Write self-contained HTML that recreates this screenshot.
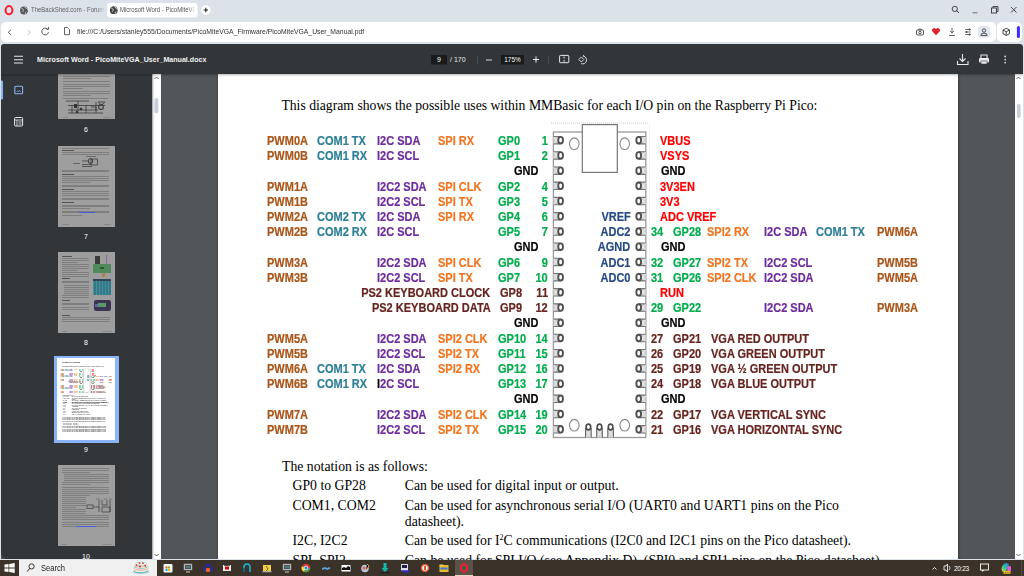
<!DOCTYPE html>
<html><head><meta charset="utf-8">
<style>
*{margin:0;padding:0;box-sizing:border-box}
html,body{width:1024px;height:576px;overflow:hidden;background:#dbe2ea;font-family:"Liberation Sans",sans-serif;position:relative}
.abs{position:absolute}
#addr{position:absolute;left:1px;top:21.9px;width:995px;height:20.4px;background:#fff;border-radius:5px}
#ext{position:absolute;left:997px;top:21.9px;width:25px;height:20.4px;background:#fff;border-radius:5px}
#viewer{position:absolute;left:1px;top:44px;width:1022px;height:515px;background:#525659;border-radius:4px 4px 0 0;overflow:hidden}
#tb{position:absolute;left:0;top:0;width:1022px;height:30px;background:#323639;box-shadow:0 1px 2px rgba(0,0,0,.3);z-index:2}
#side{position:absolute;left:0;top:0;width:151px;height:515px;background:#323639;border-radius:0 0 0 6px;overflow:hidden;box-shadow:1px 0 2px rgba(0,0,0,.4);z-index:1}
#sbar{position:absolute;left:151px;top:30px;width:9px;height:485px;background:#fff}
#rbar{position:absolute;left:1014px;top:30px;width:8px;height:485px;background:#fff}
#page{position:absolute;left:217px;top:30px;width:740px;height:485px;background:#fff;box-shadow:0 0 2px 0.5px rgba(0,0,0,.35)}
#task{position:absolute;left:0;top:560px;width:1024px;height:16px;background:#3b3329}
.lb{position:absolute;font-weight:bold;font-size:12.3px;line-height:12.3px;white-space:pre;transform:scaleX(0.895);transform-origin:0 0;-webkit-text-stroke:0.2px}
.lb.r{text-align:right;transform-origin:100% 0}
.board{position:absolute;left:0;top:0}
.pd{fill:none;stroke:#5a5a5a;stroke-width:1.3}
.pi{fill:none;stroke:#aaa;stroke-width:0.6}
.ser{position:absolute;font-family:"Liberation Serif",serif;font-size:13.76px;line-height:13.76px;color:#000;white-space:pre}
.ui{position:absolute;white-space:pre;font-family:"Liberation Sans",sans-serif}
.th{position:absolute;background:#9e9e9e}
.th.g>*{filter:blur(0.3px)}
.tl{position:absolute;background:#5f5f5f;height:0.9px}
.num{position:absolute;color:#fff;font-size:7px;line-height:7px;width:20px;text-align:center}
</style></head><body>

<svg class="abs" style="left:0;top:0" width="230" height="22" viewBox="0 0 230 22">
 <ellipse cx="9" cy="10.2" rx="3.4" ry="4.1" fill="none" stroke="#ff1b2d" stroke-width="2"/>
 <circle cx="24" cy="10.5" r="3.9" fill="#555"/>
 <path d="M21.3 8.2 q1.5 0.3 2 1.5 q0.2 1.5 -0.8 2.3 M24.8 6.9 q0.3 1.3 1.6 1.4 q1.2 0.3 1.3 1.6 M25.5 13.9 q-0.3-1.6 0.9-2.2" stroke="#dbe2ea" stroke-width="0.8" fill="none"/>
 <rect x="107" y="3" width="90.5" height="14.5" rx="3" fill="#fff"/>
 <circle cx="113.8" cy="10.2" r="3.9" fill="#444"/>
 <path d="M111.1 7.9 q1.5 0.3 2 1.5 q0.2 1.5 -0.8 2.3 M114.6 6.6 q0.3 1.3 1.6 1.4 q1.2 0.3 1.3 1.6 M115.3 13.6 q-0.3-1.6 0.9-2.2" stroke="#fff" stroke-width="0.8" fill="none"/>
 <circle cx="205.8" cy="10" r="4.8" fill="#fff"/>
 <path d="M203.6 10 h4.4 M205.8 7.8 v4.4" stroke="#222" stroke-width="1.1"/>
 <defs>
  <linearGradient id="f1" x1="0" x2="1"><stop offset="0" stop-color="#dbe2ea" stop-opacity="0"/><stop offset="1" stop-color="#dbe2ea"/></linearGradient>
  <linearGradient id="f2" x1="0" x2="1"><stop offset="0" stop-color="#fff" stop-opacity="0"/><stop offset="1" stop-color="#fff"/></linearGradient>
 </defs>
</svg>
<div class="ui" style="left:30.5px;top:6px;font-size:6.9px;line-height:8px;color:#5f5f5f;width:84px;overflow:hidden;transform:scaleX(0.87);transform-origin:0 0">TheBackShed.com - Forum</div>
<div class="abs" style="left:97px;top:4px;width:8px;height:13px;background:linear-gradient(90deg,rgba(219,226,234,0),#dbe2ea)"></div>
<div class="ui" style="left:120px;top:6px;font-size:6.9px;line-height:8px;color:#555;width:86px;overflow:hidden;transform:scaleX(0.87);transform-origin:0 0">Microsoft Word - PicoMiteVGA</div>
<div class="abs" style="left:188px;top:4px;width:8px;height:12px;background:linear-gradient(90deg,rgba(255,255,255,0),#fff)"></div>
<svg class="abs" style="left:940px;top:0" width="84" height="22" viewBox="940 0 84 22">
 <circle cx="954.8" cy="8.9" r="2.6" fill="none" stroke="#333" stroke-width="0.9"/>
 <path d="M956.7 10.8 l2.2 2.2" stroke="#333" stroke-width="1"/>
 <path d="M972.5 12.8 h5" stroke="#555" stroke-width="0.8"/>
 <rect x="991.5" y="8" width="5" height="5" fill="none" stroke="#333" stroke-width="0.9"/>
 <path d="M993 8 v-1.5 h5 v5 h-1.5" fill="none" stroke="#333" stroke-width="0.9"/>
 <path d="M1011 7 l5.5 5.5 M1016.5 7 l-5.5 5.5" stroke="#333" stroke-width="0.9"/>
</svg>

<div id="addr"></div><div id="ext"></div>

<svg class="abs" style="left:0;top:22px" width="1024" height="22" viewBox="0 22 1024 22">
 <path d="M11 29.8 l-2.8 2.6 l2.8 2.6" fill="none" stroke="#555" stroke-width="0.9"/>
 <path d="M27.8 29.8 l2.8 2.6 l-2.8 2.6" fill="none" stroke="#bbb" stroke-width="0.9"/>
 <path d="M48.2 30 a3.4 3.4 0 1 0 0.3 2.2" fill="none" stroke="#555" stroke-width="1"/>
 <path d="M46.3 29.2 h2.3 v-2.2" fill="none" stroke="#555" stroke-width="1"/>
 <path d="M64.5 27.5 h3 l2 2 v5.2 h-5 z" fill="none" stroke="#555" stroke-width="0.9"/>
 <g fill="none" stroke="#444" stroke-width="0.9">
  <rect x="916.5" y="30" width="7" height="5" rx="1"/><circle cx="920" cy="32.5" r="1.3"/><path d="M918.5 30 l0.6-1 h1.8 l0.6 1"/>
  <path d="M949 35.5 h6 M952 28 v5 M950 31 l2 2 l2-2" stroke="#555"/>
  <path d="M965 29.5 h6 M965 32 h6 M965 34.5 h6" stroke="#555" stroke-width="0.8"/><circle cx="969.5" cy="29.5" r="0.9" fill="#444" stroke="none"/><circle cx="966.5" cy="32" r="0.9" fill="#444" stroke="none"/><circle cx="969.5" cy="34.5" r="0.9" fill="#444" stroke="none"/>
 </g>
 <path d="M936 35.2 l-3.6-3.6 a2.1 2.1 0 0 1 3.6-2.4 a2.1 2.1 0 0 1 3.6 2.4 z" fill="#e0242f"/>
 <rect x="978" y="26" width="12" height="12" rx="3" fill="#e3e8ef"/>
 <circle cx="984" cy="30.5" r="1.7" fill="none" stroke="#444" stroke-width="0.9"/>
 <path d="M980.8 35.5 a3.2 2.4 0 0 1 6.4 0 z" fill="none" stroke="#444" stroke-width="0.9"/>
 <path d="M1006.2 28.3 l3.2 1.7 v3.8 l-3.2 1.7 l-3.2-1.7 v-3.8 z M1003 30 l3.2 1.8 l3.2-1.8 M1006.2 31.8 v3.7" fill="none" stroke="#333" stroke-width="0.9" stroke-linejoin="round"/>
 <rect x="1016.9" y="26" width="3" height="12" rx="1.5" fill="#3a2bff"/>
</svg>
<div class="ui" style="left:76.5px;top:27.6px;font-size:7.5px;line-height:8px;color:#333;transform:scaleX(0.91);transform-origin:0 0">file:///C:/Users/stanley555/Documents/PicoMiteVGA_Firmware/PicoMiteVGA_User_Manual.pdf</div>

<div id="viewer">
 <div id="side">
<svg class="abs" style="left:0;top:0" width="151" height="515" viewBox="1 44 151 515">
 <rect x="0" y="80.5" width="3" height="19" rx="1.3" fill="#8ab4f8"/>
 <rect x="14.8" y="86.2" width="7.8" height="7.6" rx="1" fill="none" stroke="#8ab4f8" stroke-width="1.1"/>
 <path d="M16.8 91.8 l1-1 l0.8 0.8 l0.8-1.2 l1.2 1.4" fill="none" stroke="#8ab4f8" stroke-width="0.8"/>
 <rect x="14.6" y="117.5" width="8" height="8.5" rx="1" fill="none" stroke="#e8eaed" stroke-width="1"/>
 <path d="M14.6 120 h8 M17 120 v6 M18.5 122 h3 M18.5 124 h3" stroke="#e8eaed" stroke-width="0.8"/>
</svg>
<div class="th g" style="left:56.5px;top:-5.600000000000001px;width:57.5px;height:81px;background:#9e9e9e"><div class="tl" style="left:5px;top:3.0px;width:47.0px;background:#7e7e7e"></div><div class="tl" style="left:5px;top:5.4px;width:47.0px;background:#7e7e7e"></div><div class="tl" style="left:5px;top:7.8px;width:47.0px;background:#7e7e7e"></div><div class="tl" style="left:5px;top:10.2px;width:28.2px;background:#7e7e7e"></div><div class="tl" style="left:5px;top:12.6px;width:47.0px;background:#7e7e7e"></div><div class="tl" style="left:5px;top:15.0px;width:47.0px;background:#7e7e7e"></div><div class="tl" style="left:5px;top:17.4px;width:47.0px;background:#7e7e7e"></div><div class="tl" style="left:5px;top:19.8px;width:28.2px;background:#7e7e7e"></div><div class="tl" style="left:5px;top:22.2px;width:47.0px;background:#7e7e7e"></div><div class="tl" style="left:5px;top:24.6px;width:47.0px;background:#7e7e7e"></div><div class="tl" style="left:5px;top:27.0px;width:47.0px;background:#7e7e7e"></div><div class="tl" style="left:5px;top:29.4px;width:47.0px;background:#7e7e7e"></div><div class="tl" style="left:5px;top:35.0px;width:47.0px;background:#7e7e7e"></div><div class="tl" style="left:5px;top:37.3px;width:47.0px;background:#7e7e7e"></div><div class="tl" style="left:5px;top:39.6px;width:28.2px;background:#7e7e7e"></div><div class="tl" style="left:5px;top:43.0px;width:47.0px;background:#7e7e7e"></div><div class="tl" style="left:5px;top:45.3px;width:47.0px;background:#7e7e7e"></div><div class="tl" style="left:5px;top:47.6px;width:47.0px;background:#7e7e7e"></div><div class="tl" style="left:5px;top:50.0px;width:20.0px;background:#7e7e7e"></div><div class="tl" style="left:5px;top:52.5px;width:47.0px;background:#7e7e7e"></div><div class="tl" style="left:5px;top:54.7px;width:47.0px;background:#7e7e7e"></div><div class="tl" style="left:5px;top:56.9px;width:28.2px;background:#7e7e7e"></div><div class="tl" style="left:5px;top:59.5px;width:45.0px;background:#7e7e7e"></div><svg class="abs" style="left:0;top:0" width="58" height="81"><g fill="none" stroke="#3a3a3a" stroke-width="0.8"><path d="M8 63 h23 M10 67.5 h37 M10 72 h30 M10 75 h35 M14 67.5 v8 M20 63 v10 M28 67 v8 M38 64 v8 M33 69 h5 v6"/><circle cx="43" cy="69" r="2.4" stroke-width="1.1"/><path d="M40 64 h7 l-3.5 3z"/></g><g fill="#333"><circle cx="23" cy="71" r="1.3"/><circle cx="19" cy="74" r="1.3"/><rect x="16" y="66" width="3" height="4"/></g></svg><div class="tl" style="left:5px;top:78.5px;width:5.0px;background:#888"></div><div class="tl" style="left:45px;top:78.5px;width:8.0px;background:#888"></div></div>
<div class="th g" style="left:56.5px;top:101.5px;width:57.5px;height:81px;background:#9e9e9e"><div class="tl" style="left:4px;top:2.5px;width:47.0px;background:#7e7e7e"></div><div class="tl" style="left:4px;top:4.8px;width:12.0px;background:#555"></div><div class="tl" style="left:4px;top:6.8px;width:47.0px;background:#7e7e7e"></div><div class="tl" style="left:4px;top:8.7px;width:47.0px;background:#7e7e7e"></div><svg class="abs" style="left:0;top:0" width="58" height="81"><g fill="none" stroke="#333" stroke-width="0.7"><rect x="33" y="13" width="6.5" height="6"/><circle cx="32.5" cy="15" r="2.3" stroke-width="1"/><path d="M24 15 h6 M24 18.5 h10 M24 20.5 h10"/><path d="M28 10.5 h10" stroke="#555"/></g></svg><div class="tl" style="left:15px;top:17.0px;width:7.0px;background:#666"></div><div class="tl" style="left:4px;top:24.0px;width:47.0px;background:#7e7e7e"></div><div class="tl" style="left:4px;top:25.9px;width:47.0px;background:#7e7e7e"></div><div class="tl" style="left:4px;top:28.0px;width:12.0px;background:#555"></div><div class="tl" style="left:4px;top:30.5px;width:47.0px;background:#7e7e7e"></div><div class="tl" style="left:4px;top:32.4px;width:47.0px;background:#7e7e7e"></div><div class="tl" style="left:4px;top:34.3px;width:47.0px;background:#7e7e7e"></div><div class="tl" style="left:4px;top:36.2px;width:28.2px;background:#7e7e7e"></div><div class="tl" style="left:4px;top:39.0px;width:47.0px;background:#7e7e7e"></div><div class="tl" style="left:4px;top:40.9px;width:47.0px;background:#7e7e7e"></div><div class="tl" style="left:4px;top:43.0px;width:12.0px;background:#555"></div><div class="tl" style="left:4px;top:45.5px;width:47.0px;background:#7e7e7e"></div><div class="tl" style="left:4px;top:47.4px;width:47.0px;background:#7e7e7e"></div><div class="tl" style="left:4px;top:49.3px;width:47.0px;background:#7e7e7e"></div><div class="tl" style="left:4px;top:52.0px;width:47.0px;background:#7e7e7e"></div><div class="tl" style="left:4px;top:53.9px;width:47.0px;background:#7e7e7e"></div><div class="tl" style="left:4px;top:56.5px;width:12.0px;background:#555"></div><div class="tl" style="left:4px;top:59.0px;width:47.0px;background:#7e7e7e"></div><div class="tl" style="left:4px;top:60.9px;width:47.0px;background:#7e7e7e"></div><div class="tl" style="left:4px;top:62.8px;width:28.2px;background:#7e7e7e"></div><div class="tl" style="left:4px;top:65.0px;width:47.0px;background:#7e7e7e"></div><div class="tl" style="left:4px;top:66.9px;width:47.0px;background:#7e7e7e"></div><div class="tl" style="left:21px;top:66.9px;width:16px;background:#4a5ad8"></div><div class="tl" style="left:4px;top:69.0px;width:20.0px;background:#7e7e7e"></div><div class="tl" style="left:4px;top:78.5px;width:7.0px;background:#888"></div><div class="tl" style="left:46px;top:78.5px;width:7.0px;background:#888"></div></div>
<div class="th g" style="left:56.5px;top:208px;width:57.5px;height:81px;background:#9e9e9e"><div class="tl" style="left:4px;top:3.5px;width:10.0px;background:#555"></div><div class="tl" style="left:4px;top:6.0px;width:27.0px;background:#7e7e7e"></div><div class="tl" style="left:4px;top:7.9px;width:27.0px;background:#7e7e7e"></div><div class="tl" style="left:4px;top:9.8px;width:16.2px;background:#7e7e7e"></div><div class="tl" style="left:4px;top:12.0px;width:27.0px;background:#7e7e7e"></div><div class="tl" style="left:4px;top:13.9px;width:27.0px;background:#7e7e7e"></div><div class="tl" style="left:4px;top:15.8px;width:27.0px;background:#7e7e7e"></div><div class="tl" style="left:4px;top:17.7px;width:16.2px;background:#7e7e7e"></div><div class="tl" style="left:4px;top:20.0px;width:27.0px;background:#7e7e7e"></div><div class="tl" style="left:4px;top:21.9px;width:27.0px;background:#7e7e7e"></div><div class="tl" style="left:4px;top:23.8px;width:27.0px;background:#7e7e7e"></div><div class="tl" style="left:4px;top:26.0px;width:8.0px;background:#555"></div><div class="tl" style="left:4px;top:28.5px;width:27.0px;background:#7e7e7e"></div><div class="tl" style="left:4px;top:30.4px;width:27.0px;background:#7e7e7e"></div><div class="tl" style="left:6px;top:33.0px;width:25.0px;background:#7e7e7e"></div><div class="tl" style="left:6px;top:34.9px;width:25.0px;background:#7e7e7e"></div><div class="tl" style="left:6px;top:36.8px;width:25.0px;background:#7e7e7e"></div><div class="tl" style="left:6px;top:38.7px;width:25.0px;background:#7e7e7e"></div><div class="tl" style="left:6px;top:40.6px;width:25.0px;background:#7e7e7e"></div><div class="tl" style="left:4px;top:43.0px;width:27.0px;background:#7e7e7e"></div><div class="tl" style="left:4px;top:44.9px;width:27.0px;background:#7e7e7e"></div><div class="tl" style="left:4px;top:48.0px;width:8.0px;background:#555"></div><div class="tl" style="left:4px;top:50.5px;width:27.0px;background:#7e7e7e"></div><div class="tl" style="left:4px;top:52.4px;width:27.0px;background:#7e7e7e"></div><div class="tl" style="left:4px;top:55.0px;width:27.0px;background:#7e7e7e"></div><div class="tl" style="left:4px;top:56.9px;width:27.0px;background:#7e7e7e"></div><div class="tl" style="left:4px;top:63.0px;width:8.0px;background:#555"></div><div class="tl" style="left:4px;top:65.0px;width:48.0px;background:#7e7e7e"></div><div class="tl" style="left:4px;top:66.9px;width:48.0px;background:#7e7e7e"></div><div class="tl" style="left:4px;top:68.8px;width:48.0px;background:#7e7e7e"></div><div class="tl" style="left:4px;top:78.5px;width:5.0px;background:#888"></div><div class="tl" style="left:44px;top:78.5px;width:10.0px;background:#888"></div><div class="abs" style="left:35px;top:11.5px;width:18px;height:9.5px;background:#4f8a5c"></div><div class="abs" style="left:37px;top:4px;width:5px;height:8px;background:#3a3a3a"></div><div class="abs" style="left:48px;top:3px;width:1.6px;height:9px;background:#8a6a9a"></div><div class="abs" style="left:44px;top:21px;width:3px;height:4px;background:#b08050"></div><div class="abs" style="left:42px;top:15px;width:4px;height:2px;background:#2a5a3a"></div><div class="abs" style="left:35px;top:27px;width:18px;height:16px;background:#2f7a88;background-image:repeating-linear-gradient(90deg,rgba(255,255,255,.15) 0 1px,transparent 1px 3px)"></div><div class="abs" style="left:35px;top:27px;width:18px;height:1.5px;background:#345"></div><div class="abs" style="left:36px;top:47.5px;width:17px;height:11.5px;background:#3d3452;border-radius:2px"></div><div class="abs" style="left:40px;top:50.5px;width:8px;height:4px;background:#5a9a6a"></div><div class="abs" style="left:37px;top:52px;width:3px;height:3px;background:#5a6aa0"></div></div>
<div class="abs" style="left:53.2px;top:311.6px;width:64.5px;height:87.5px;background:#8ab4f8"></div>
<div class="th" style="left:56.2px;top:314.3px;width:58px;height:81.8px;background:#fff"><div style="position:absolute;left:0;top:0;width:740px;height:1044px;transform:scale(0.07838);transform-origin:0 0;overflow:hidden;background:#fff">
<div style="position:absolute;left:-218px;top:9px;width:1024px;height:576px"><div class="ser" style="left:281.4px;top:98.93px;font-size:13.7px;line-height:13.7px">This diagram shows the possible uses within MMBasic for each I/O pin on the Raspberry Pi Pico:</div>
<div class="ser" style="left:282px;top:459.68px">The notation is as follows:</div>
<div class="ser" style="left:292.5px;top:479.48px">GP0 to GP28</div>
<div class="ser" style="left:404.8px;top:479.48px">Can be used for digital input or output.</div>
<div class="ser" style="left:292.5px;top:498.88px">COM1, COM2</div>
<div class="ser" style="left:404.8px;top:498.88px">Can be used for asynchronous serial I/O (UART0 and UART1 pins on the Pico</div>
<div class="ser" style="left:404.8px;top:514.88px">datasheet).</div>
<div class="ser" style="left:292.5px;top:533.68px">I2C, I2C2</div>
<div class="ser" style="left:404.8px;top:533.68px">Can be used for I<span style="font-size:8px;vertical-align:5px;line-height:0">2</span>C communications (I2C0 and I2C1 pins on the Pico datasheet).</div>
<div class="ser" style="left:292.5px;top:553.68px">SPI, SPI2</div>
<div class="ser" style="left:404.8px;top:553.68px">Can be used for SPI I/O (see Appendix D). (SPI0 and SPI1 pins on the Pico datasheet).</div>
<svg class="board" width="1024" height="576" viewBox="0 0 1024 576" style="filter:blur(0.25px)">
<line x1="551" y1="123" x2="649" y2="123" stroke="#c8c8c8" stroke-width="0.9" stroke-dasharray="1.2 0.8"/>
<line x1="649.5" y1="123" x2="649.5" y2="439" stroke="#f0f0f0" stroke-width="0.8"/>
<rect x="553.4" y="132" width="92.4" height="305.5" fill="none" stroke="#9a9a9a" stroke-width="1.3"/>
<rect x="582.3" y="124.6" width="35" height="47.8" fill="#fff" stroke="#777" stroke-width="1.2"/>
<ellipse cx="574.3" cy="143.7" rx="4.8" ry="5.8" fill="none" stroke="#8a8a8a" stroke-width="1.1"/>
<ellipse cx="624.7" cy="143.7" rx="4.8" ry="5.8" fill="none" stroke="#8a8a8a" stroke-width="1.1"/>
<ellipse cx="574.3" cy="425.2" rx="4.8" ry="5.8" fill="none" stroke="#8a8a8a" stroke-width="1.1"/>
<ellipse cx="624.7" cy="425.2" rx="4.8" ry="5.8" fill="none" stroke="#8a8a8a" stroke-width="1.1"/>
<rect x="553.4" y="136.20" width="7" height="8" fill="#cfcfcf"/><path d="M553.4 136.50 h7 M553.4 143.90 h7" stroke="#777" stroke-width="1.1"/><path d="M554 137.20 l5 6 M554 143.20 l5 -6" stroke="#f4f4f4" stroke-width="0.9"/><ellipse cx="560.6" cy="140.20" rx="2.4" ry="3.3" fill="#fff" stroke="#505050" stroke-width="1.9"/><rect x="638.8" y="136.20" width="7" height="8" fill="#d2d2d2"/><path d="M638.8 136.50 h7 M638.8 143.90 h7" stroke="#777" stroke-width="1.1"/><path d="M640.3 137.20 l5 6 M640.3 143.20 l5 -6" stroke="#f4f4f4" stroke-width="0.9"/><ellipse cx="638.7" cy="140.20" rx="2.4" ry="3.3" fill="#fff" stroke="#505050" stroke-width="1.9"/><rect x="553.4" y="151.42" width="7" height="8" fill="#cfcfcf"/><path d="M553.4 151.72 h7 M553.4 159.12 h7" stroke="#777" stroke-width="1.1"/><path d="M554 152.42 l5 6 M554 158.42 l5 -6" stroke="#f4f4f4" stroke-width="0.9"/><ellipse cx="560.6" cy="155.42" rx="2.4" ry="3.3" fill="#fff" stroke="#505050" stroke-width="1.9"/><rect x="638.8" y="151.42" width="7" height="8" fill="#d2d2d2"/><path d="M638.8 151.72 h7 M638.8 159.12 h7" stroke="#777" stroke-width="1.1"/><path d="M640.3 152.42 l5 6 M640.3 158.42 l5 -6" stroke="#f4f4f4" stroke-width="0.9"/><ellipse cx="638.7" cy="155.42" rx="2.4" ry="3.3" fill="#fff" stroke="#505050" stroke-width="1.9"/><rect x="553.4" y="166.63" width="7" height="8" fill="#cfcfcf"/><path d="M553.4 166.93 h7 M553.4 174.33 h7" stroke="#777" stroke-width="1.1"/><path d="M554 167.63 l5 6 M554 173.63 l5 -6" stroke="#f4f4f4" stroke-width="0.9"/><ellipse cx="560.6" cy="170.63" rx="2.4" ry="3.3" fill="#fff" stroke="#505050" stroke-width="1.9"/><rect x="638.8" y="166.63" width="7" height="8" fill="#d2d2d2"/><path d="M638.8 166.93 h7 M638.8 174.33 h7" stroke="#777" stroke-width="1.1"/><path d="M640.3 167.63 l5 6 M640.3 173.63 l5 -6" stroke="#f4f4f4" stroke-width="0.9"/><ellipse cx="638.7" cy="170.63" rx="2.4" ry="3.3" fill="#fff" stroke="#505050" stroke-width="1.9"/><rect x="553.4" y="181.85" width="7" height="8" fill="#cfcfcf"/><path d="M553.4 182.15 h7 M553.4 189.55 h7" stroke="#777" stroke-width="1.1"/><path d="M554 182.85 l5 6 M554 188.85 l5 -6" stroke="#f4f4f4" stroke-width="0.9"/><ellipse cx="560.6" cy="185.85" rx="2.4" ry="3.3" fill="#fff" stroke="#505050" stroke-width="1.9"/><rect x="638.8" y="181.85" width="7" height="8" fill="#d2d2d2"/><path d="M638.8 182.15 h7 M638.8 189.55 h7" stroke="#777" stroke-width="1.1"/><path d="M640.3 182.85 l5 6 M640.3 188.85 l5 -6" stroke="#f4f4f4" stroke-width="0.9"/><ellipse cx="638.7" cy="185.85" rx="2.4" ry="3.3" fill="#fff" stroke="#505050" stroke-width="1.9"/><rect x="553.4" y="197.06" width="7" height="8" fill="#cfcfcf"/><path d="M553.4 197.36 h7 M553.4 204.76 h7" stroke="#777" stroke-width="1.1"/><path d="M554 198.06 l5 6 M554 204.06 l5 -6" stroke="#f4f4f4" stroke-width="0.9"/><ellipse cx="560.6" cy="201.06" rx="2.4" ry="3.3" fill="#fff" stroke="#505050" stroke-width="1.9"/><rect x="638.8" y="197.06" width="7" height="8" fill="#d2d2d2"/><path d="M638.8 197.36 h7 M638.8 204.76 h7" stroke="#777" stroke-width="1.1"/><path d="M640.3 198.06 l5 6 M640.3 204.06 l5 -6" stroke="#f4f4f4" stroke-width="0.9"/><ellipse cx="638.7" cy="201.06" rx="2.4" ry="3.3" fill="#fff" stroke="#505050" stroke-width="1.9"/><rect x="553.4" y="212.28" width="7" height="8" fill="#cfcfcf"/><path d="M553.4 212.58 h7 M553.4 219.98 h7" stroke="#777" stroke-width="1.1"/><path d="M554 213.28 l5 6 M554 219.28 l5 -6" stroke="#f4f4f4" stroke-width="0.9"/><ellipse cx="560.6" cy="216.28" rx="2.4" ry="3.3" fill="#fff" stroke="#505050" stroke-width="1.9"/><rect x="638.8" y="212.28" width="7" height="8" fill="#d2d2d2"/><path d="M638.8 212.58 h7 M638.8 219.98 h7" stroke="#777" stroke-width="1.1"/><path d="M640.3 213.28 l5 6 M640.3 219.28 l5 -6" stroke="#f4f4f4" stroke-width="0.9"/><ellipse cx="638.7" cy="216.28" rx="2.4" ry="3.3" fill="#fff" stroke="#505050" stroke-width="1.9"/><rect x="553.4" y="227.50" width="7" height="8" fill="#cfcfcf"/><path d="M553.4 227.80 h7 M553.4 235.20 h7" stroke="#777" stroke-width="1.1"/><path d="M554 228.50 l5 6 M554 234.50 l5 -6" stroke="#f4f4f4" stroke-width="0.9"/><ellipse cx="560.6" cy="231.50" rx="2.4" ry="3.3" fill="#fff" stroke="#505050" stroke-width="1.9"/><rect x="638.8" y="227.50" width="7" height="8" fill="#d2d2d2"/><path d="M638.8 227.80 h7 M638.8 235.20 h7" stroke="#777" stroke-width="1.1"/><path d="M640.3 228.50 l5 6 M640.3 234.50 l5 -6" stroke="#f4f4f4" stroke-width="0.9"/><ellipse cx="638.7" cy="231.50" rx="2.4" ry="3.3" fill="#fff" stroke="#505050" stroke-width="1.9"/><rect x="553.4" y="242.71" width="7" height="8" fill="#cfcfcf"/><path d="M553.4 243.01 h7 M553.4 250.41 h7" stroke="#777" stroke-width="1.1"/><path d="M554 243.71 l5 6 M554 249.71 l5 -6" stroke="#f4f4f4" stroke-width="0.9"/><ellipse cx="560.6" cy="246.71" rx="2.4" ry="3.3" fill="#fff" stroke="#505050" stroke-width="1.9"/><rect x="638.8" y="242.71" width="7" height="8" fill="#d2d2d2"/><path d="M638.8 243.01 h7 M638.8 250.41 h7" stroke="#777" stroke-width="1.1"/><path d="M640.3 243.71 l5 6 M640.3 249.71 l5 -6" stroke="#f4f4f4" stroke-width="0.9"/><ellipse cx="638.7" cy="246.71" rx="2.4" ry="3.3" fill="#fff" stroke="#505050" stroke-width="1.9"/><rect x="553.4" y="257.93" width="7" height="8" fill="#cfcfcf"/><path d="M553.4 258.23 h7 M553.4 265.63 h7" stroke="#777" stroke-width="1.1"/><path d="M554 258.93 l5 6 M554 264.93 l5 -6" stroke="#f4f4f4" stroke-width="0.9"/><ellipse cx="560.6" cy="261.93" rx="2.4" ry="3.3" fill="#fff" stroke="#505050" stroke-width="1.9"/><rect x="638.8" y="257.93" width="7" height="8" fill="#d2d2d2"/><path d="M638.8 258.23 h7 M638.8 265.63 h7" stroke="#777" stroke-width="1.1"/><path d="M640.3 258.93 l5 6 M640.3 264.93 l5 -6" stroke="#f4f4f4" stroke-width="0.9"/><ellipse cx="638.7" cy="261.93" rx="2.4" ry="3.3" fill="#fff" stroke="#505050" stroke-width="1.9"/><rect x="553.4" y="273.14" width="7" height="8" fill="#cfcfcf"/><path d="M553.4 273.44 h7 M553.4 280.84 h7" stroke="#777" stroke-width="1.1"/><path d="M554 274.14 l5 6 M554 280.14 l5 -6" stroke="#f4f4f4" stroke-width="0.9"/><ellipse cx="560.6" cy="277.14" rx="2.4" ry="3.3" fill="#fff" stroke="#505050" stroke-width="1.9"/><rect x="638.8" y="273.14" width="7" height="8" fill="#d2d2d2"/><path d="M638.8 273.44 h7 M638.8 280.84 h7" stroke="#777" stroke-width="1.1"/><path d="M640.3 274.14 l5 6 M640.3 280.14 l5 -6" stroke="#f4f4f4" stroke-width="0.9"/><ellipse cx="638.7" cy="277.14" rx="2.4" ry="3.3" fill="#fff" stroke="#505050" stroke-width="1.9"/><rect x="553.4" y="288.36" width="7" height="8" fill="#cfcfcf"/><path d="M553.4 288.66 h7 M553.4 296.06 h7" stroke="#777" stroke-width="1.1"/><path d="M554 289.36 l5 6 M554 295.36 l5 -6" stroke="#f4f4f4" stroke-width="0.9"/><ellipse cx="560.6" cy="292.36" rx="2.4" ry="3.3" fill="#fff" stroke="#505050" stroke-width="1.9"/><rect x="638.8" y="288.36" width="7" height="8" fill="#d2d2d2"/><path d="M638.8 288.66 h7 M638.8 296.06 h7" stroke="#777" stroke-width="1.1"/><path d="M640.3 289.36 l5 6 M640.3 295.36 l5 -6" stroke="#f4f4f4" stroke-width="0.9"/><ellipse cx="638.7" cy="292.36" rx="2.4" ry="3.3" fill="#fff" stroke="#505050" stroke-width="1.9"/><rect x="553.4" y="303.58" width="7" height="8" fill="#cfcfcf"/><path d="M553.4 303.88 h7 M553.4 311.28 h7" stroke="#777" stroke-width="1.1"/><path d="M554 304.58 l5 6 M554 310.58 l5 -6" stroke="#f4f4f4" stroke-width="0.9"/><ellipse cx="560.6" cy="307.58" rx="2.4" ry="3.3" fill="#fff" stroke="#505050" stroke-width="1.9"/><rect x="638.8" y="303.58" width="7" height="8" fill="#d2d2d2"/><path d="M638.8 303.88 h7 M638.8 311.28 h7" stroke="#777" stroke-width="1.1"/><path d="M640.3 304.58 l5 6 M640.3 310.58 l5 -6" stroke="#f4f4f4" stroke-width="0.9"/><ellipse cx="638.7" cy="307.58" rx="2.4" ry="3.3" fill="#fff" stroke="#505050" stroke-width="1.9"/><rect x="553.4" y="318.79" width="7" height="8" fill="#cfcfcf"/><path d="M553.4 319.09 h7 M553.4 326.49 h7" stroke="#777" stroke-width="1.1"/><path d="M554 319.79 l5 6 M554 325.79 l5 -6" stroke="#f4f4f4" stroke-width="0.9"/><ellipse cx="560.6" cy="322.79" rx="2.4" ry="3.3" fill="#fff" stroke="#505050" stroke-width="1.9"/><rect x="638.8" y="318.79" width="7" height="8" fill="#d2d2d2"/><path d="M638.8 319.09 h7 M638.8 326.49 h7" stroke="#777" stroke-width="1.1"/><path d="M640.3 319.79 l5 6 M640.3 325.79 l5 -6" stroke="#f4f4f4" stroke-width="0.9"/><ellipse cx="638.7" cy="322.79" rx="2.4" ry="3.3" fill="#fff" stroke="#505050" stroke-width="1.9"/><rect x="553.4" y="334.01" width="7" height="8" fill="#cfcfcf"/><path d="M553.4 334.31 h7 M553.4 341.71 h7" stroke="#777" stroke-width="1.1"/><path d="M554 335.01 l5 6 M554 341.01 l5 -6" stroke="#f4f4f4" stroke-width="0.9"/><ellipse cx="560.6" cy="338.01" rx="2.4" ry="3.3" fill="#fff" stroke="#505050" stroke-width="1.9"/><rect x="638.8" y="334.01" width="7" height="8" fill="#d2d2d2"/><path d="M638.8 334.31 h7 M638.8 341.71 h7" stroke="#777" stroke-width="1.1"/><path d="M640.3 335.01 l5 6 M640.3 341.01 l5 -6" stroke="#f4f4f4" stroke-width="0.9"/><ellipse cx="638.7" cy="338.01" rx="2.4" ry="3.3" fill="#fff" stroke="#505050" stroke-width="1.9"/><rect x="553.4" y="349.22" width="7" height="8" fill="#cfcfcf"/><path d="M553.4 349.52 h7 M553.4 356.92 h7" stroke="#777" stroke-width="1.1"/><path d="M554 350.22 l5 6 M554 356.22 l5 -6" stroke="#f4f4f4" stroke-width="0.9"/><ellipse cx="560.6" cy="353.22" rx="2.4" ry="3.3" fill="#fff" stroke="#505050" stroke-width="1.9"/><rect x="638.8" y="349.22" width="7" height="8" fill="#d2d2d2"/><path d="M638.8 349.52 h7 M638.8 356.92 h7" stroke="#777" stroke-width="1.1"/><path d="M640.3 350.22 l5 6 M640.3 356.22 l5 -6" stroke="#f4f4f4" stroke-width="0.9"/><ellipse cx="638.7" cy="353.22" rx="2.4" ry="3.3" fill="#fff" stroke="#505050" stroke-width="1.9"/><rect x="553.4" y="364.44" width="7" height="8" fill="#cfcfcf"/><path d="M553.4 364.74 h7 M553.4 372.14 h7" stroke="#777" stroke-width="1.1"/><path d="M554 365.44 l5 6 M554 371.44 l5 -6" stroke="#f4f4f4" stroke-width="0.9"/><ellipse cx="560.6" cy="368.44" rx="2.4" ry="3.3" fill="#fff" stroke="#505050" stroke-width="1.9"/><rect x="638.8" y="364.44" width="7" height="8" fill="#d2d2d2"/><path d="M638.8 364.74 h7 M638.8 372.14 h7" stroke="#777" stroke-width="1.1"/><path d="M640.3 365.44 l5 6 M640.3 371.44 l5 -6" stroke="#f4f4f4" stroke-width="0.9"/><ellipse cx="638.7" cy="368.44" rx="2.4" ry="3.3" fill="#fff" stroke="#505050" stroke-width="1.9"/><rect x="553.4" y="379.66" width="7" height="8" fill="#cfcfcf"/><path d="M553.4 379.96 h7 M553.4 387.36 h7" stroke="#777" stroke-width="1.1"/><path d="M554 380.66 l5 6 M554 386.66 l5 -6" stroke="#f4f4f4" stroke-width="0.9"/><ellipse cx="560.6" cy="383.66" rx="2.4" ry="3.3" fill="#fff" stroke="#505050" stroke-width="1.9"/><rect x="638.8" y="379.66" width="7" height="8" fill="#d2d2d2"/><path d="M638.8 379.96 h7 M638.8 387.36 h7" stroke="#777" stroke-width="1.1"/><path d="M640.3 380.66 l5 6 M640.3 386.66 l5 -6" stroke="#f4f4f4" stroke-width="0.9"/><ellipse cx="638.7" cy="383.66" rx="2.4" ry="3.3" fill="#fff" stroke="#505050" stroke-width="1.9"/><rect x="553.4" y="394.87" width="7" height="8" fill="#cfcfcf"/><path d="M553.4 395.17 h7 M553.4 402.57 h7" stroke="#777" stroke-width="1.1"/><path d="M554 395.87 l5 6 M554 401.87 l5 -6" stroke="#f4f4f4" stroke-width="0.9"/><ellipse cx="560.6" cy="398.87" rx="2.4" ry="3.3" fill="#fff" stroke="#505050" stroke-width="1.9"/><rect x="638.8" y="394.87" width="7" height="8" fill="#d2d2d2"/><path d="M638.8 395.17 h7 M638.8 402.57 h7" stroke="#777" stroke-width="1.1"/><path d="M640.3 395.87 l5 6 M640.3 401.87 l5 -6" stroke="#f4f4f4" stroke-width="0.9"/><ellipse cx="638.7" cy="398.87" rx="2.4" ry="3.3" fill="#fff" stroke="#505050" stroke-width="1.9"/><rect x="553.4" y="410.09" width="7" height="8" fill="#cfcfcf"/><path d="M553.4 410.39 h7 M553.4 417.79 h7" stroke="#777" stroke-width="1.1"/><path d="M554 411.09 l5 6 M554 417.09 l5 -6" stroke="#f4f4f4" stroke-width="0.9"/><ellipse cx="560.6" cy="414.09" rx="2.4" ry="3.3" fill="#fff" stroke="#505050" stroke-width="1.9"/><rect x="638.8" y="410.09" width="7" height="8" fill="#d2d2d2"/><path d="M638.8 410.39 h7 M638.8 417.79 h7" stroke="#777" stroke-width="1.1"/><path d="M640.3 411.09 l5 6 M640.3 417.09 l5 -6" stroke="#f4f4f4" stroke-width="0.9"/><ellipse cx="638.7" cy="414.09" rx="2.4" ry="3.3" fill="#fff" stroke="#505050" stroke-width="1.9"/><rect x="553.4" y="425.30" width="7" height="8" fill="#cfcfcf"/><path d="M553.4 425.60 h7 M553.4 433.00 h7" stroke="#777" stroke-width="1.1"/><path d="M554 426.30 l5 6 M554 432.30 l5 -6" stroke="#f4f4f4" stroke-width="0.9"/><ellipse cx="560.6" cy="429.30" rx="2.4" ry="3.3" fill="#fff" stroke="#505050" stroke-width="1.9"/><rect x="638.8" y="425.30" width="7" height="8" fill="#d2d2d2"/><path d="M638.8 425.60 h7 M638.8 433.00 h7" stroke="#777" stroke-width="1.1"/><path d="M640.3 426.30 l5 6 M640.3 432.30 l5 -6" stroke="#f4f4f4" stroke-width="0.9"/><ellipse cx="638.7" cy="429.30" rx="2.4" ry="3.3" fill="#fff" stroke="#505050" stroke-width="1.9"/>
<rect x="585.8" y="429" width="5.2" height="8.5" fill="#d2d2d2"/><path d="M586.2 430 l4.4 7 M590.6 430 l-4.4 7" stroke="#f4f4f4" stroke-width="0.7"/><path d="M585.6 437.5 v-9.5 M591.2 437.5 v-9.5" stroke="#5a5a5a" stroke-width="1"/><ellipse cx="588.4" cy="427" rx="2.3" ry="2.9" fill="#fff" stroke="#4a4a4a" stroke-width="1.6"/><rect x="596.9" y="429" width="5.2" height="8.5" fill="#d2d2d2"/><path d="M597.3 430 l4.4 7 M601.7 430 l-4.4 7" stroke="#f4f4f4" stroke-width="0.7"/><path d="M596.7 437.5 v-9.5 M602.3 437.5 v-9.5" stroke="#5a5a5a" stroke-width="1"/><ellipse cx="599.5" cy="427" rx="2.3" ry="2.9" fill="#fff" stroke="#4a4a4a" stroke-width="1.6"/><rect x="608.0" y="429" width="5.2" height="8.5" fill="#d2d2d2"/><path d="M608.4 430 l4.4 7 M612.8 430 l-4.4 7" stroke="#f4f4f4" stroke-width="0.7"/><path d="M607.8 437.5 v-9.5 M613.4 437.5 v-9.5" stroke="#5a5a5a" stroke-width="1"/><ellipse cx="610.6" cy="427" rx="2.3" ry="2.9" fill="#fff" stroke="#4a4a4a" stroke-width="1.6"/>
</svg>
<div class="lb" style="left:267.0px;top:134.99px;color:#a9561a">PWM0A</div>
<div class="lb" style="left:316.5px;top:134.99px;color:#2b7f98">COM1 TX</div>
<div class="lb" style="left:377.0px;top:134.99px;color:#6d2c9e">I2C SDA</div>
<div class="lb" style="left:437.5px;top:134.99px;color:#f07622">SPI RX</div>
<div class="lb" style="left:498.0px;top:134.99px;color:#00ad4c">GP0</div>
<div class="lb" style="left:267.0px;top:150.19px;color:#a9561a">PWM0B</div>
<div class="lb" style="left:316.5px;top:150.19px;color:#2b7f98">COM1 RX</div>
<div class="lb" style="left:377.0px;top:150.19px;color:#6d2c9e">I2C SCL</div>
<div class="lb" style="left:498.0px;top:150.19px;color:#00ad4c">GP1</div>
<div class="lb" style="left:267.0px;top:180.59px;color:#a9561a">PWM1A</div>
<div class="lb" style="left:377.0px;top:180.59px;color:#6d2c9e">I2C2 SDA</div>
<div class="lb" style="left:437.5px;top:180.59px;color:#f07622">SPI CLK</div>
<div class="lb" style="left:498.0px;top:180.59px;color:#00ad4c">GP2</div>
<div class="lb" style="left:267.0px;top:195.79px;color:#a9561a">PWM1B</div>
<div class="lb" style="left:377.0px;top:195.79px;color:#6d2c9e">I2C2 SCL</div>
<div class="lb" style="left:437.5px;top:195.79px;color:#f07622">SPI TX</div>
<div class="lb" style="left:498.0px;top:195.79px;color:#00ad4c">GP3</div>
<div class="lb" style="left:267.0px;top:210.99px;color:#a9561a">PWM2A</div>
<div class="lb" style="left:316.5px;top:210.99px;color:#2b7f98">COM2 TX</div>
<div class="lb" style="left:377.0px;top:210.99px;color:#6d2c9e">I2C SDA</div>
<div class="lb" style="left:437.5px;top:210.99px;color:#f07622">SPI RX</div>
<div class="lb" style="left:498.0px;top:210.99px;color:#00ad4c">GP4</div>
<div class="lb" style="left:267.0px;top:226.19px;color:#a9561a">PWM2B</div>
<div class="lb" style="left:316.5px;top:226.19px;color:#2b7f98">COM2 RX</div>
<div class="lb" style="left:377.0px;top:226.19px;color:#6d2c9e">I2C SCL</div>
<div class="lb" style="left:498.0px;top:226.19px;color:#00ad4c">GP5</div>
<div class="lb" style="left:267.0px;top:256.59px;color:#a9561a">PWM3A</div>
<div class="lb" style="left:377.0px;top:256.59px;color:#6d2c9e">I2C2 SDA</div>
<div class="lb" style="left:437.5px;top:256.59px;color:#f07622">SPI CLK</div>
<div class="lb" style="left:498.0px;top:256.59px;color:#00ad4c">GP6</div>
<div class="lb" style="left:267.0px;top:271.79px;color:#a9561a">PWM3B</div>
<div class="lb" style="left:377.0px;top:271.79px;color:#6d2c9e">I2C2 SCL</div>
<div class="lb" style="left:437.5px;top:271.79px;color:#f07622">SPI TX</div>
<div class="lb" style="left:498.0px;top:271.79px;color:#00ad4c">GP7</div>
<div class="lb" style="left:267.0px;top:332.59px;color:#a9561a">PWM5A</div>
<div class="lb" style="left:377.0px;top:332.59px;color:#6d2c9e">I2C2 SDA</div>
<div class="lb" style="left:437.5px;top:332.59px;color:#f07622">SPI2 CLK</div>
<div class="lb" style="left:498.0px;top:332.59px;color:#00ad4c">GP10</div>
<div class="lb" style="left:267.0px;top:347.79px;color:#a9561a">PWM5B</div>
<div class="lb" style="left:377.0px;top:347.79px;color:#6d2c9e">I2C2 SCL</div>
<div class="lb" style="left:437.5px;top:347.79px;color:#f07622">SPI2 TX</div>
<div class="lb" style="left:498.0px;top:347.79px;color:#00ad4c">GP11</div>
<div class="lb" style="left:267.0px;top:362.99px;color:#a9561a">PWM6A</div>
<div class="lb" style="left:316.5px;top:362.99px;color:#2b7f98">COM1 TX</div>
<div class="lb" style="left:377.0px;top:362.99px;color:#6d2c9e">I2C SDA</div>
<div class="lb" style="left:437.5px;top:362.99px;color:#f07622">SPI2 RX</div>
<div class="lb" style="left:498.0px;top:362.99px;color:#00ad4c">GP12</div>
<div class="lb" style="left:267.0px;top:378.19px;color:#a9561a">PWM6B</div>
<div class="lb" style="left:316.5px;top:378.19px;color:#2b7f98">COM1 RX</div>
<div class="lb" style="left:377.0px;top:378.19px;color:#6d2c9e"><span style="color:#000">I</span>2C SCL</div>
<div class="lb" style="left:498.0px;top:378.19px;color:#00ad4c">GP13</div>
<div class="lb" style="left:267.0px;top:408.59px;color:#a9561a">PWM7A</div>
<div class="lb" style="left:377.0px;top:408.59px;color:#6d2c9e">I2C2 SDA</div>
<div class="lb" style="left:437.5px;top:408.59px;color:#f07622">SPI2 CLK</div>
<div class="lb" style="left:498.0px;top:408.59px;color:#00ad4c">GP14</div>
<div class="lb" style="left:267.0px;top:423.79px;color:#a9561a">PWM7B</div>
<div class="lb" style="left:377.0px;top:423.79px;color:#6d2c9e">I2C2 SCL</div>
<div class="lb" style="left:437.5px;top:423.79px;color:#f07622">SPI2 TX</div>
<div class="lb" style="left:498.0px;top:423.79px;color:#00ad4c">GP15</div>
<div class="lb r" style="right:476.2px;top:134.99px;color:#00ad4c">1</div>
<div class="lb r" style="right:476.2px;top:150.19px;color:#00ad4c">2</div>
<div class="lb r" style="right:476.2px;top:180.59px;color:#00ad4c">4</div>
<div class="lb r" style="right:476.2px;top:195.79px;color:#00ad4c">5</div>
<div class="lb r" style="right:476.2px;top:210.99px;color:#00ad4c">6</div>
<div class="lb r" style="right:476.2px;top:226.19px;color:#00ad4c">7</div>
<div class="lb r" style="right:476.2px;top:256.59px;color:#00ad4c">9</div>
<div class="lb r" style="right:476.2px;top:271.79px;color:#00ad4c">10</div>
<div class="lb r" style="right:476.2px;top:286.99px;color:#66231f">11</div>
<div class="lb r" style="right:476.2px;top:302.19px;color:#66231f">12</div>
<div class="lb r" style="right:476.2px;top:332.59px;color:#00ad4c">14</div>
<div class="lb r" style="right:476.2px;top:347.79px;color:#00ad4c">15</div>
<div class="lb r" style="right:476.2px;top:362.99px;color:#00ad4c">16</div>
<div class="lb r" style="right:476.2px;top:378.19px;color:#00ad4c">17</div>
<div class="lb r" style="right:476.2px;top:408.59px;color:#00ad4c">19</div>
<div class="lb r" style="right:476.2px;top:423.79px;color:#00ad4c">20</div>
<div class="lb" style="left:513.5px;top:165.39px;color:#000">GND</div>
<div class="lb" style="left:513.5px;top:241.39px;color:#000">GND</div>
<div class="lb" style="left:513.5px;top:317.39px;color:#000">GND</div>
<div class="lb" style="left:513.5px;top:393.39px;color:#000">GND</div>
<div class="lb r" style="right:533.5px;top:286.99px;color:#66231f">PS2 KEYBOARD CLOCK</div>
<div class="lb" style="left:499.5px;top:286.99px;color:#66231f">GP8</div>
<div class="lb r" style="right:533.5px;top:302.19px;color:#66231f">PS2 KEYBOARD DATA</div>
<div class="lb" style="left:499.5px;top:302.19px;color:#66231f">GP9</div>
<div class="lb" style="left:660.0px;top:134.99px;color:#ff0000">VBUS</div>
<div class="lb" style="left:660.0px;top:150.19px;color:#ff0000">VSYS</div>
<div class="lb" style="left:660.0px;top:180.59px;color:#ff0000">3V3EN</div>
<div class="lb" style="left:660.0px;top:195.79px;color:#ff0000">3V3</div>
<div class="lb" style="left:660.0px;top:210.99px;color:#ff0000">ADC VREF</div>
<div class="lb" style="left:660.0px;top:286.99px;color:#ff0000">RUN</div>
<div class="lb" style="left:660.5px;top:165.39px;color:#000">GND</div>
<div class="lb" style="left:660.5px;top:241.39px;color:#000">GND</div>
<div class="lb" style="left:660.5px;top:317.39px;color:#000">GND</div>
<div class="lb" style="left:660.5px;top:393.39px;color:#000">GND</div>
<div class="lb r" style="right:393.5px;top:210.99px;color:#274a86">VREF</div>
<div class="lb r" style="right:393.5px;top:226.19px;color:#274a86">ADC2</div>
<div class="lb r" style="right:393.5px;top:241.39px;color:#274a86">AGND</div>
<div class="lb r" style="right:393.5px;top:256.59px;color:#274a86">ADC1</div>
<div class="lb r" style="right:393.5px;top:271.79px;color:#274a86">ADC0</div>
<div class="lb" style="left:650.5px;top:226.19px;color:#00ad4c">34</div>
<div class="lb" style="left:673.0px;top:226.19px;color:#00ad4c">GP28</div>
<div class="lb" style="left:707.0px;top:226.19px;color:#f07622">SPI2 RX</div>
<div class="lb" style="left:763.5px;top:226.19px;color:#6d2c9e">I2C SDA</div>
<div class="lb" style="left:816.0px;top:226.19px;color:#2b7f98">COM1 TX</div>
<div class="lb" style="left:876.5px;top:226.19px;color:#a9561a">PWM6A</div>
<div class="lb" style="left:650.5px;top:256.59px;color:#00ad4c">32</div>
<div class="lb" style="left:673.0px;top:256.59px;color:#00ad4c">GP27</div>
<div class="lb" style="left:707.0px;top:256.59px;color:#f07622">SPI2 TX</div>
<div class="lb" style="left:763.5px;top:256.59px;color:#6d2c9e">I2C2 SCL</div>
<div class="lb" style="left:876.5px;top:256.59px;color:#a9561a">PWM5B</div>
<div class="lb" style="left:650.5px;top:271.79px;color:#00ad4c">31</div>
<div class="lb" style="left:673.0px;top:271.79px;color:#00ad4c">GP26</div>
<div class="lb" style="left:707.0px;top:271.79px;color:#f07622">SPI2 CLK</div>
<div class="lb" style="left:763.5px;top:271.79px;color:#6d2c9e">I2C2 SDA</div>
<div class="lb" style="left:876.5px;top:271.79px;color:#a9561a">PWM5A</div>
<div class="lb" style="left:650.5px;top:302.19px;color:#00ad4c">29</div>
<div class="lb" style="left:673.0px;top:302.19px;color:#00ad4c">GP22</div>
<div class="lb" style="left:763.5px;top:302.19px;color:#6d2c9e">I2C2 SDA</div>
<div class="lb" style="left:876.5px;top:302.19px;color:#a9561a">PWM3A</div>
<div class="lb" style="left:650.5px;top:332.59px;color:#66231f">27</div>
<div class="lb" style="left:673.0px;top:332.59px;color:#66231f">GP21</div>
<div class="lb" style="left:711.0px;top:332.59px;color:#66231f">VGA RED OUTPUT</div>
<div class="lb" style="left:650.5px;top:347.79px;color:#66231f">26</div>
<div class="lb" style="left:673.0px;top:347.79px;color:#66231f">GP20</div>
<div class="lb" style="left:711.0px;top:347.79px;color:#66231f">VGA GREEN OUTPUT</div>
<div class="lb" style="left:650.5px;top:362.99px;color:#66231f">25</div>
<div class="lb" style="left:673.0px;top:362.99px;color:#66231f">GP19</div>
<div class="lb" style="left:711.0px;top:362.99px;color:#66231f">VGA ½ GREEN OUTPUT</div>
<div class="lb" style="left:650.5px;top:378.19px;color:#66231f">24</div>
<div class="lb" style="left:673.0px;top:378.19px;color:#66231f">GP18</div>
<div class="lb" style="left:711.0px;top:378.19px;color:#66231f">VGA BLUE OUTPUT</div>
<div class="lb" style="left:650.5px;top:408.59px;color:#66231f">22</div>
<div class="lb" style="left:673.0px;top:408.59px;color:#66231f">GP17</div>
<div class="lb" style="left:711.0px;top:408.59px;color:#66231f">VGA VERTICAL SYNC</div>
<div class="lb" style="left:650.5px;top:423.79px;color:#66231f">21</div>
<div class="lb" style="left:673.0px;top:423.79px;color:#66231f">GP16</div>
<div class="lb" style="left:711.0px;top:423.79px;color:#66231f">VGA HORIZONTAL SYNC</div></div>
<div style="position:absolute;left:64px;top:40px;font:bold 21px 'Liberation Sans',sans-serif;color:#222">PicoMiteVGA Hardware</div>
<div class="ser" style="left:75px;top:562px">PWMnx</div><div class="ser" style="left:187px;top:562px">Can be used for PWM or SERVO output (see the PWM and SERVO commands).</div><div class="ser" style="left:75px;top:581px">VREF</div><div class="ser" style="left:187px;top:581px">Can be used to provide a voltage reference for the analog inputs.</div><div class="ser" style="left:75px;top:600px">ADCn</div><div class="ser" style="left:187px;top:600px">Can be used for analog input (ADC0, ADC1 and ADC2 pins on the Pico datasheet).</div><div class="ser" style="left:75px;top:619px">AGND</div><div class="ser" style="left:187px;top:619px">Analog ground.</div><div class="ser" style="left:75px;top:638px">RUN</div><div class="ser" style="left:187px;top:638px">Can be used to reset the processor.</div><div class="ser" style="left:75px;top:657px">GND</div><div class="ser" style="left:187px;top:657px">Common ground.</div><div class="ser" style="left:75px;top:676px">VBUS</div><div class="ser" style="left:187px;top:676px">5V supply directly from the USB port.</div><div class="ser" style="left:75px;top:695px">VSYS</div><div class="ser" style="left:187px;top:695px">Main supply for the Pico (1.8V to 5.5V).</div><div class="ser" style="left:75px;top:714px">3V3EN</div><div class="ser" style="left:187px;top:714px">Enable 3.3V regulator (pull low to disable).</div><div class="ser" style="left:64px;top:753px">The GPIO pins can be used for many functions and MMBasic will automatically configure the pin w</div><div class="ser" style="left:64px;top:769px">The GPIO pins can be used for many functions and MMBasic will automatically configure the pin w</div><div class="ser" style="left:64px;top:785px">The GPIO pins can be used for many functions and MMBasic will automatically configure the pin w</div><div class="ser" style="left:64px;top:801px">The GPIO pins can be used for many functions and MMBasic will automatically configure the pin w</div><div class="ser" style="left:75px;top:827px">SETPIN GP4, DOUT   PIN(GP4) = 1</div><div class="ser" style="left:75px;top:843px">SETPIN GP4, DOUT   PIN(GP4) = 1</div><div class="ser" style="left:64px;top:871px">The GPIO pins can be used for many functions and MMBasic will automatically configure the pin wh</div><div class="ser" style="left:64px;top:887px">The GPIO pins can be used for many functions and MMBasic will automatically configure the pin wh</div><div class="ser" style="left:64px;top:903px">The GPIO pins can be used for many functions and MMBasic will automatically configure the pin wh</div><div class="ser" style="left:64px;top:919px">The GPIO pins can be used for many functions and MMBasic will automatically configure the pin wh</div><div class="ser" style="left:64px;top:935px">The GPIO pins can be used for many functions and MMBasic will automatically configure the pin wh</div><div class="ser" style="left:64px;top:1000px;font-size:9px">PicoMiteVGA User Manual</div><div class="ser" style="left:640px;top:1000px;font-size:9px">Page 9</div>
</div></div>
<div class="th g" style="left:56.5px;top:421px;width:57.5px;height:81px;background:#9e9e9e"><div class="tl" style="left:4px;top:3.0px;width:47.0px;background:#7e7e7e"></div><div class="tl" style="left:4px;top:4.9px;width:47.0px;background:#7e7e7e"></div><div class="tl" style="left:4px;top:6.8px;width:28.2px;background:#7e7e7e"></div><div class="tl" style="left:6px;top:9.0px;width:45.0px;background:#7e7e7e"></div><div class="tl" style="left:6px;top:10.9px;width:45.0px;background:#7e7e7e"></div><div class="tl" style="left:6px;top:12.8px;width:45.0px;background:#7e7e7e"></div><div class="tl" style="left:6px;top:14.7px;width:45.0px;background:#7e7e7e"></div><div class="tl" style="left:4px;top:17.0px;width:47.0px;background:#7e7e7e"></div><div class="tl" style="left:4px;top:18.9px;width:28.2px;background:#7e7e7e"></div><div class="tl" style="left:4px;top:22.0px;width:47.0px;background:#7e7e7e"></div><div class="tl" style="left:4px;top:23.9px;width:47.0px;background:#7e7e7e"></div><div class="tl" style="left:4px;top:25.8px;width:47.0px;background:#7e7e7e"></div><div class="tl" style="left:4px;top:27.7px;width:47.0px;background:#7e7e7e"></div><div class="tl" style="left:4px;top:29.6px;width:28.2px;background:#7e7e7e"></div><div class="tl" style="left:4px;top:32.0px;width:24.0px;background:#7e7e7e"></div><div class="tl" style="left:4px;top:33.9px;width:24.0px;background:#7e7e7e"></div><div class="tl" style="left:4px;top:35.8px;width:24.0px;background:#7e7e7e"></div><div class="tl" style="left:4px;top:37.7px;width:24.0px;background:#7e7e7e"></div><div class="tl" style="left:4px;top:39.6px;width:24.0px;background:#7e7e7e"></div><div class="tl" style="left:4px;top:41.5px;width:14.4px;background:#7e7e7e"></div><div class="tl" style="left:4px;top:44.0px;width:24.0px;background:#7e7e7e"></div><div class="tl" style="left:4px;top:45.9px;width:24.0px;background:#7e7e7e"></div><div class="tl" style="left:4px;top:47.8px;width:24.0px;background:#7e7e7e"></div><svg class="abs" style="left:0;top:0" width="58" height="81"><g fill="none" stroke="#3a3a3a" stroke-width="0.7"><rect x="29" y="40" width="6" height="3.5"/><path d="M35 42 h6 M41 35 v12 M44 35 v5 h5 v-5 M52 35 v12 M44 42 h8 v5 h-8 z"/><path d="M38 34 h4 M46 34 h3 M51 34 h3" stroke="#666"/></g></svg><div class="tl" style="left:4px;top:50.0px;width:47.0px;background:#7e7e7e"></div><div class="tl" style="left:4px;top:51.9px;width:47.0px;background:#7e7e7e"></div><div class="tl" style="left:4px;top:53.8px;width:47.0px;background:#7e7e7e"></div><div class="tl" style="left:4px;top:57.0px;width:47.0px;background:#7e7e7e"></div><div class="tl" style="left:4px;top:58.9px;width:47.0px;background:#7e7e7e"></div><div class="tl" style="left:4px;top:60.8px;width:47.0px;background:#7e7e7e"></div><div class="tl" style="left:18px;top:60.5px;width:20px;background:#4a5ad8"></div><div class="tl" style="left:4px;top:78.5px;width:5.0px;background:#888"></div><div class="tl" style="left:45px;top:78.5px;width:9.0px;background:#888"></div></div>
<div class="num" style="left:75px;top:82px">6</div>
<div class="num" style="left:75px;top:188.5px">7</div>
<div class="num" style="left:75px;top:295px">8</div>
<div class="num" style="left:75px;top:402px">9</div>
<div class="num" style="left:75px;top:508.5px">10</div>
</div>
 <div id="tb">
<svg class="abs" style="left:0;top:0" width="1022" height="30" viewBox="1 44 1022 30">
 <path d="M14 56.3 h9 M14 59.7 h9 M14 63 h9" stroke="#e8eaed" stroke-width="1.1"/>
 <rect x="431" y="55" width="16" height="9.5" fill="#191b1c"/>
 <path d="M477.5 55.5 v9" stroke="#4d5154" stroke-width="0.8"/>
 <path d="M486 60 h6" stroke="#e8eaed" stroke-width="0.9"/>
 <rect x="501" y="55" width="23" height="9.5" fill="#191b1c"/>
 <path d="M533 59.5 h6 M536 56.5 v6" stroke="#e8eaed" stroke-width="1.1"/>
 <path d="M548.5 55.5 v9" stroke="#4d5154" stroke-width="0.8"/>
 <rect x="559.6" y="55.4" width="9.2" height="7.3" rx="0.8" fill="none" stroke="#e8eaed" stroke-width="1"/>
 <path d="M562.8 57.6 l1.3-1 l1.3 1z M562.8 60.7 l1.3 1 l1.3-1z" fill="#e8eaed"/>
 <path d="M564.1 57.4 v1.2 M564.1 59.8 v1.2" stroke="#e8eaed" stroke-width="0.6"/>
 <path d="M578.8 59.5 l2.5-2.5 l2.5 2.5 l-2.5 2.5z" fill="none" stroke="#e8eaed" stroke-width="0.9"/>
 <path d="M583.6 56.2 A3.9 3.9 0 1 1 581.2 63.6" fill="none" stroke="#e8eaed" stroke-width="0.9"/>
 <path d="M582.6 56.6 l1-1.8 l1 1.8z" fill="#e8eaed"/>
 <path d="M962.5 54 v7 M959.5 58.5 l3 3 l3-3 M957.5 61 v3.5 h10.5 v-3.5" fill="none" stroke="#e8eaed" stroke-width="1.1"/>
 <path d="M981 58 v-3 h6 v3" fill="none" stroke="#e8eaed" stroke-width="1.1"/>
 <rect x="979" y="58" width="10" height="4.5" rx="1" fill="#e8eaed"/>
 <rect x="981" y="61" width="6" height="3" fill="#e8eaed" stroke="#323639" stroke-width="0.6"/>
 <circle cx="1005.2" cy="56.4" r="0.85" fill="#e8eaed"/><circle cx="1005.2" cy="59.5" r="0.85" fill="#e8eaed"/><circle cx="1005.2" cy="62.6" r="0.85" fill="#e8eaed"/>
</svg>
<div class="ui" style="left:36px;top:12px;font-size:7.1px;line-height:8px;font-weight:bold;color:#f1f3f4">Microsoft Word - PicoMiteVGA_User_Manual.docx</div>
<div class="ui" style="left:430px;top:12px;width:16px;text-align:center;font-size:7px;line-height:8px;color:#fff">9</div>
<div class="ui" style="left:449px;top:12px;font-size:7px;line-height:8px;color:#e8eaed">/ 170</div>
<div class="ui" style="left:500px;top:12px;width:23px;text-align:center;font-size:6.4px;line-height:8px;color:#fff">175%</div>
</div>
 <div id="sbar"></div>
 <div id="page"></div>
 <div id="rbar"></div>
 
<svg class="abs" style="left:0;top:0" width="1022" height="515" viewBox="1 44 1022 515">
 <path d="M154.5 79 l2-2 l2 2" fill="none" stroke="#555" stroke-width="0.9"/>
 <rect x="154.5" y="98" width="3.8" height="15.5" rx="1.9" fill="#c5d0dc"/>
 <path d="M154.5 554 l2 2 l2-2" fill="none" stroke="#555" stroke-width="0.9"/>
 <path d="M1016.5 79 l2-2 l2 2" fill="none" stroke="#555" stroke-width="0.9"/>
 <rect x="1017" y="104" width="3.6" height="14" rx="1.8" fill="#c5d0dc"/>
 <path d="M1016.5 554 l2 2 l2-2" fill="none" stroke="#555" stroke-width="0.9"/>
</svg>

</div>
<div id="doc" class="abs" style="left:0;top:0;width:1024px;height:560px;overflow:hidden">
<div class="ser" style="left:281.4px;top:98.93px;font-size:13.7px;line-height:13.7px">This diagram shows the possible uses within MMBasic for each I/O pin on the Raspberry Pi Pico:</div>
<div class="ser" style="left:282px;top:459.68px">The notation is as follows:</div>
<div class="ser" style="left:292.5px;top:479.48px">GP0 to GP28</div>
<div class="ser" style="left:404.8px;top:479.48px">Can be used for digital input or output.</div>
<div class="ser" style="left:292.5px;top:498.88px">COM1, COM2</div>
<div class="ser" style="left:404.8px;top:498.88px">Can be used for asynchronous serial I/O (UART0 and UART1 pins on the Pico</div>
<div class="ser" style="left:404.8px;top:514.88px">datasheet).</div>
<div class="ser" style="left:292.5px;top:533.68px">I2C, I2C2</div>
<div class="ser" style="left:404.8px;top:533.68px">Can be used for I<span style="font-size:8px;vertical-align:5px;line-height:0">2</span>C communications (I2C0 and I2C1 pins on the Pico datasheet).</div>
<div class="ser" style="left:292.5px;top:553.68px">SPI, SPI2</div>
<div class="ser" style="left:404.8px;top:553.68px">Can be used for SPI I/O (see Appendix D). (SPI0 and SPI1 pins on the Pico datasheet).</div>
<svg class="board" width="1024" height="576" viewBox="0 0 1024 576" style="filter:blur(0.25px)">
<line x1="551" y1="123" x2="649" y2="123" stroke="#c8c8c8" stroke-width="0.9" stroke-dasharray="1.2 0.8"/>
<line x1="649.5" y1="123" x2="649.5" y2="439" stroke="#f0f0f0" stroke-width="0.8"/>
<rect x="553.4" y="132" width="92.4" height="305.5" fill="none" stroke="#9a9a9a" stroke-width="1.3"/>
<rect x="582.3" y="124.6" width="35" height="47.8" fill="#fff" stroke="#777" stroke-width="1.2"/>
<ellipse cx="574.3" cy="143.7" rx="4.8" ry="5.8" fill="none" stroke="#8a8a8a" stroke-width="1.1"/>
<ellipse cx="624.7" cy="143.7" rx="4.8" ry="5.8" fill="none" stroke="#8a8a8a" stroke-width="1.1"/>
<ellipse cx="574.3" cy="425.2" rx="4.8" ry="5.8" fill="none" stroke="#8a8a8a" stroke-width="1.1"/>
<ellipse cx="624.7" cy="425.2" rx="4.8" ry="5.8" fill="none" stroke="#8a8a8a" stroke-width="1.1"/>
<rect x="553.4" y="136.20" width="7" height="8" fill="#cfcfcf"/><path d="M553.4 136.50 h7 M553.4 143.90 h7" stroke="#777" stroke-width="1.1"/><path d="M554 137.20 l5 6 M554 143.20 l5 -6" stroke="#f4f4f4" stroke-width="0.9"/><ellipse cx="560.6" cy="140.20" rx="2.4" ry="3.3" fill="#fff" stroke="#505050" stroke-width="1.9"/><rect x="638.8" y="136.20" width="7" height="8" fill="#d2d2d2"/><path d="M638.8 136.50 h7 M638.8 143.90 h7" stroke="#777" stroke-width="1.1"/><path d="M640.3 137.20 l5 6 M640.3 143.20 l5 -6" stroke="#f4f4f4" stroke-width="0.9"/><ellipse cx="638.7" cy="140.20" rx="2.4" ry="3.3" fill="#fff" stroke="#505050" stroke-width="1.9"/><rect x="553.4" y="151.42" width="7" height="8" fill="#cfcfcf"/><path d="M553.4 151.72 h7 M553.4 159.12 h7" stroke="#777" stroke-width="1.1"/><path d="M554 152.42 l5 6 M554 158.42 l5 -6" stroke="#f4f4f4" stroke-width="0.9"/><ellipse cx="560.6" cy="155.42" rx="2.4" ry="3.3" fill="#fff" stroke="#505050" stroke-width="1.9"/><rect x="638.8" y="151.42" width="7" height="8" fill="#d2d2d2"/><path d="M638.8 151.72 h7 M638.8 159.12 h7" stroke="#777" stroke-width="1.1"/><path d="M640.3 152.42 l5 6 M640.3 158.42 l5 -6" stroke="#f4f4f4" stroke-width="0.9"/><ellipse cx="638.7" cy="155.42" rx="2.4" ry="3.3" fill="#fff" stroke="#505050" stroke-width="1.9"/><rect x="553.4" y="166.63" width="7" height="8" fill="#cfcfcf"/><path d="M553.4 166.93 h7 M553.4 174.33 h7" stroke="#777" stroke-width="1.1"/><path d="M554 167.63 l5 6 M554 173.63 l5 -6" stroke="#f4f4f4" stroke-width="0.9"/><ellipse cx="560.6" cy="170.63" rx="2.4" ry="3.3" fill="#fff" stroke="#505050" stroke-width="1.9"/><rect x="638.8" y="166.63" width="7" height="8" fill="#d2d2d2"/><path d="M638.8 166.93 h7 M638.8 174.33 h7" stroke="#777" stroke-width="1.1"/><path d="M640.3 167.63 l5 6 M640.3 173.63 l5 -6" stroke="#f4f4f4" stroke-width="0.9"/><ellipse cx="638.7" cy="170.63" rx="2.4" ry="3.3" fill="#fff" stroke="#505050" stroke-width="1.9"/><rect x="553.4" y="181.85" width="7" height="8" fill="#cfcfcf"/><path d="M553.4 182.15 h7 M553.4 189.55 h7" stroke="#777" stroke-width="1.1"/><path d="M554 182.85 l5 6 M554 188.85 l5 -6" stroke="#f4f4f4" stroke-width="0.9"/><ellipse cx="560.6" cy="185.85" rx="2.4" ry="3.3" fill="#fff" stroke="#505050" stroke-width="1.9"/><rect x="638.8" y="181.85" width="7" height="8" fill="#d2d2d2"/><path d="M638.8 182.15 h7 M638.8 189.55 h7" stroke="#777" stroke-width="1.1"/><path d="M640.3 182.85 l5 6 M640.3 188.85 l5 -6" stroke="#f4f4f4" stroke-width="0.9"/><ellipse cx="638.7" cy="185.85" rx="2.4" ry="3.3" fill="#fff" stroke="#505050" stroke-width="1.9"/><rect x="553.4" y="197.06" width="7" height="8" fill="#cfcfcf"/><path d="M553.4 197.36 h7 M553.4 204.76 h7" stroke="#777" stroke-width="1.1"/><path d="M554 198.06 l5 6 M554 204.06 l5 -6" stroke="#f4f4f4" stroke-width="0.9"/><ellipse cx="560.6" cy="201.06" rx="2.4" ry="3.3" fill="#fff" stroke="#505050" stroke-width="1.9"/><rect x="638.8" y="197.06" width="7" height="8" fill="#d2d2d2"/><path d="M638.8 197.36 h7 M638.8 204.76 h7" stroke="#777" stroke-width="1.1"/><path d="M640.3 198.06 l5 6 M640.3 204.06 l5 -6" stroke="#f4f4f4" stroke-width="0.9"/><ellipse cx="638.7" cy="201.06" rx="2.4" ry="3.3" fill="#fff" stroke="#505050" stroke-width="1.9"/><rect x="553.4" y="212.28" width="7" height="8" fill="#cfcfcf"/><path d="M553.4 212.58 h7 M553.4 219.98 h7" stroke="#777" stroke-width="1.1"/><path d="M554 213.28 l5 6 M554 219.28 l5 -6" stroke="#f4f4f4" stroke-width="0.9"/><ellipse cx="560.6" cy="216.28" rx="2.4" ry="3.3" fill="#fff" stroke="#505050" stroke-width="1.9"/><rect x="638.8" y="212.28" width="7" height="8" fill="#d2d2d2"/><path d="M638.8 212.58 h7 M638.8 219.98 h7" stroke="#777" stroke-width="1.1"/><path d="M640.3 213.28 l5 6 M640.3 219.28 l5 -6" stroke="#f4f4f4" stroke-width="0.9"/><ellipse cx="638.7" cy="216.28" rx="2.4" ry="3.3" fill="#fff" stroke="#505050" stroke-width="1.9"/><rect x="553.4" y="227.50" width="7" height="8" fill="#cfcfcf"/><path d="M553.4 227.80 h7 M553.4 235.20 h7" stroke="#777" stroke-width="1.1"/><path d="M554 228.50 l5 6 M554 234.50 l5 -6" stroke="#f4f4f4" stroke-width="0.9"/><ellipse cx="560.6" cy="231.50" rx="2.4" ry="3.3" fill="#fff" stroke="#505050" stroke-width="1.9"/><rect x="638.8" y="227.50" width="7" height="8" fill="#d2d2d2"/><path d="M638.8 227.80 h7 M638.8 235.20 h7" stroke="#777" stroke-width="1.1"/><path d="M640.3 228.50 l5 6 M640.3 234.50 l5 -6" stroke="#f4f4f4" stroke-width="0.9"/><ellipse cx="638.7" cy="231.50" rx="2.4" ry="3.3" fill="#fff" stroke="#505050" stroke-width="1.9"/><rect x="553.4" y="242.71" width="7" height="8" fill="#cfcfcf"/><path d="M553.4 243.01 h7 M553.4 250.41 h7" stroke="#777" stroke-width="1.1"/><path d="M554 243.71 l5 6 M554 249.71 l5 -6" stroke="#f4f4f4" stroke-width="0.9"/><ellipse cx="560.6" cy="246.71" rx="2.4" ry="3.3" fill="#fff" stroke="#505050" stroke-width="1.9"/><rect x="638.8" y="242.71" width="7" height="8" fill="#d2d2d2"/><path d="M638.8 243.01 h7 M638.8 250.41 h7" stroke="#777" stroke-width="1.1"/><path d="M640.3 243.71 l5 6 M640.3 249.71 l5 -6" stroke="#f4f4f4" stroke-width="0.9"/><ellipse cx="638.7" cy="246.71" rx="2.4" ry="3.3" fill="#fff" stroke="#505050" stroke-width="1.9"/><rect x="553.4" y="257.93" width="7" height="8" fill="#cfcfcf"/><path d="M553.4 258.23 h7 M553.4 265.63 h7" stroke="#777" stroke-width="1.1"/><path d="M554 258.93 l5 6 M554 264.93 l5 -6" stroke="#f4f4f4" stroke-width="0.9"/><ellipse cx="560.6" cy="261.93" rx="2.4" ry="3.3" fill="#fff" stroke="#505050" stroke-width="1.9"/><rect x="638.8" y="257.93" width="7" height="8" fill="#d2d2d2"/><path d="M638.8 258.23 h7 M638.8 265.63 h7" stroke="#777" stroke-width="1.1"/><path d="M640.3 258.93 l5 6 M640.3 264.93 l5 -6" stroke="#f4f4f4" stroke-width="0.9"/><ellipse cx="638.7" cy="261.93" rx="2.4" ry="3.3" fill="#fff" stroke="#505050" stroke-width="1.9"/><rect x="553.4" y="273.14" width="7" height="8" fill="#cfcfcf"/><path d="M553.4 273.44 h7 M553.4 280.84 h7" stroke="#777" stroke-width="1.1"/><path d="M554 274.14 l5 6 M554 280.14 l5 -6" stroke="#f4f4f4" stroke-width="0.9"/><ellipse cx="560.6" cy="277.14" rx="2.4" ry="3.3" fill="#fff" stroke="#505050" stroke-width="1.9"/><rect x="638.8" y="273.14" width="7" height="8" fill="#d2d2d2"/><path d="M638.8 273.44 h7 M638.8 280.84 h7" stroke="#777" stroke-width="1.1"/><path d="M640.3 274.14 l5 6 M640.3 280.14 l5 -6" stroke="#f4f4f4" stroke-width="0.9"/><ellipse cx="638.7" cy="277.14" rx="2.4" ry="3.3" fill="#fff" stroke="#505050" stroke-width="1.9"/><rect x="553.4" y="288.36" width="7" height="8" fill="#cfcfcf"/><path d="M553.4 288.66 h7 M553.4 296.06 h7" stroke="#777" stroke-width="1.1"/><path d="M554 289.36 l5 6 M554 295.36 l5 -6" stroke="#f4f4f4" stroke-width="0.9"/><ellipse cx="560.6" cy="292.36" rx="2.4" ry="3.3" fill="#fff" stroke="#505050" stroke-width="1.9"/><rect x="638.8" y="288.36" width="7" height="8" fill="#d2d2d2"/><path d="M638.8 288.66 h7 M638.8 296.06 h7" stroke="#777" stroke-width="1.1"/><path d="M640.3 289.36 l5 6 M640.3 295.36 l5 -6" stroke="#f4f4f4" stroke-width="0.9"/><ellipse cx="638.7" cy="292.36" rx="2.4" ry="3.3" fill="#fff" stroke="#505050" stroke-width="1.9"/><rect x="553.4" y="303.58" width="7" height="8" fill="#cfcfcf"/><path d="M553.4 303.88 h7 M553.4 311.28 h7" stroke="#777" stroke-width="1.1"/><path d="M554 304.58 l5 6 M554 310.58 l5 -6" stroke="#f4f4f4" stroke-width="0.9"/><ellipse cx="560.6" cy="307.58" rx="2.4" ry="3.3" fill="#fff" stroke="#505050" stroke-width="1.9"/><rect x="638.8" y="303.58" width="7" height="8" fill="#d2d2d2"/><path d="M638.8 303.88 h7 M638.8 311.28 h7" stroke="#777" stroke-width="1.1"/><path d="M640.3 304.58 l5 6 M640.3 310.58 l5 -6" stroke="#f4f4f4" stroke-width="0.9"/><ellipse cx="638.7" cy="307.58" rx="2.4" ry="3.3" fill="#fff" stroke="#505050" stroke-width="1.9"/><rect x="553.4" y="318.79" width="7" height="8" fill="#cfcfcf"/><path d="M553.4 319.09 h7 M553.4 326.49 h7" stroke="#777" stroke-width="1.1"/><path d="M554 319.79 l5 6 M554 325.79 l5 -6" stroke="#f4f4f4" stroke-width="0.9"/><ellipse cx="560.6" cy="322.79" rx="2.4" ry="3.3" fill="#fff" stroke="#505050" stroke-width="1.9"/><rect x="638.8" y="318.79" width="7" height="8" fill="#d2d2d2"/><path d="M638.8 319.09 h7 M638.8 326.49 h7" stroke="#777" stroke-width="1.1"/><path d="M640.3 319.79 l5 6 M640.3 325.79 l5 -6" stroke="#f4f4f4" stroke-width="0.9"/><ellipse cx="638.7" cy="322.79" rx="2.4" ry="3.3" fill="#fff" stroke="#505050" stroke-width="1.9"/><rect x="553.4" y="334.01" width="7" height="8" fill="#cfcfcf"/><path d="M553.4 334.31 h7 M553.4 341.71 h7" stroke="#777" stroke-width="1.1"/><path d="M554 335.01 l5 6 M554 341.01 l5 -6" stroke="#f4f4f4" stroke-width="0.9"/><ellipse cx="560.6" cy="338.01" rx="2.4" ry="3.3" fill="#fff" stroke="#505050" stroke-width="1.9"/><rect x="638.8" y="334.01" width="7" height="8" fill="#d2d2d2"/><path d="M638.8 334.31 h7 M638.8 341.71 h7" stroke="#777" stroke-width="1.1"/><path d="M640.3 335.01 l5 6 M640.3 341.01 l5 -6" stroke="#f4f4f4" stroke-width="0.9"/><ellipse cx="638.7" cy="338.01" rx="2.4" ry="3.3" fill="#fff" stroke="#505050" stroke-width="1.9"/><rect x="553.4" y="349.22" width="7" height="8" fill="#cfcfcf"/><path d="M553.4 349.52 h7 M553.4 356.92 h7" stroke="#777" stroke-width="1.1"/><path d="M554 350.22 l5 6 M554 356.22 l5 -6" stroke="#f4f4f4" stroke-width="0.9"/><ellipse cx="560.6" cy="353.22" rx="2.4" ry="3.3" fill="#fff" stroke="#505050" stroke-width="1.9"/><rect x="638.8" y="349.22" width="7" height="8" fill="#d2d2d2"/><path d="M638.8 349.52 h7 M638.8 356.92 h7" stroke="#777" stroke-width="1.1"/><path d="M640.3 350.22 l5 6 M640.3 356.22 l5 -6" stroke="#f4f4f4" stroke-width="0.9"/><ellipse cx="638.7" cy="353.22" rx="2.4" ry="3.3" fill="#fff" stroke="#505050" stroke-width="1.9"/><rect x="553.4" y="364.44" width="7" height="8" fill="#cfcfcf"/><path d="M553.4 364.74 h7 M553.4 372.14 h7" stroke="#777" stroke-width="1.1"/><path d="M554 365.44 l5 6 M554 371.44 l5 -6" stroke="#f4f4f4" stroke-width="0.9"/><ellipse cx="560.6" cy="368.44" rx="2.4" ry="3.3" fill="#fff" stroke="#505050" stroke-width="1.9"/><rect x="638.8" y="364.44" width="7" height="8" fill="#d2d2d2"/><path d="M638.8 364.74 h7 M638.8 372.14 h7" stroke="#777" stroke-width="1.1"/><path d="M640.3 365.44 l5 6 M640.3 371.44 l5 -6" stroke="#f4f4f4" stroke-width="0.9"/><ellipse cx="638.7" cy="368.44" rx="2.4" ry="3.3" fill="#fff" stroke="#505050" stroke-width="1.9"/><rect x="553.4" y="379.66" width="7" height="8" fill="#cfcfcf"/><path d="M553.4 379.96 h7 M553.4 387.36 h7" stroke="#777" stroke-width="1.1"/><path d="M554 380.66 l5 6 M554 386.66 l5 -6" stroke="#f4f4f4" stroke-width="0.9"/><ellipse cx="560.6" cy="383.66" rx="2.4" ry="3.3" fill="#fff" stroke="#505050" stroke-width="1.9"/><rect x="638.8" y="379.66" width="7" height="8" fill="#d2d2d2"/><path d="M638.8 379.96 h7 M638.8 387.36 h7" stroke="#777" stroke-width="1.1"/><path d="M640.3 380.66 l5 6 M640.3 386.66 l5 -6" stroke="#f4f4f4" stroke-width="0.9"/><ellipse cx="638.7" cy="383.66" rx="2.4" ry="3.3" fill="#fff" stroke="#505050" stroke-width="1.9"/><rect x="553.4" y="394.87" width="7" height="8" fill="#cfcfcf"/><path d="M553.4 395.17 h7 M553.4 402.57 h7" stroke="#777" stroke-width="1.1"/><path d="M554 395.87 l5 6 M554 401.87 l5 -6" stroke="#f4f4f4" stroke-width="0.9"/><ellipse cx="560.6" cy="398.87" rx="2.4" ry="3.3" fill="#fff" stroke="#505050" stroke-width="1.9"/><rect x="638.8" y="394.87" width="7" height="8" fill="#d2d2d2"/><path d="M638.8 395.17 h7 M638.8 402.57 h7" stroke="#777" stroke-width="1.1"/><path d="M640.3 395.87 l5 6 M640.3 401.87 l5 -6" stroke="#f4f4f4" stroke-width="0.9"/><ellipse cx="638.7" cy="398.87" rx="2.4" ry="3.3" fill="#fff" stroke="#505050" stroke-width="1.9"/><rect x="553.4" y="410.09" width="7" height="8" fill="#cfcfcf"/><path d="M553.4 410.39 h7 M553.4 417.79 h7" stroke="#777" stroke-width="1.1"/><path d="M554 411.09 l5 6 M554 417.09 l5 -6" stroke="#f4f4f4" stroke-width="0.9"/><ellipse cx="560.6" cy="414.09" rx="2.4" ry="3.3" fill="#fff" stroke="#505050" stroke-width="1.9"/><rect x="638.8" y="410.09" width="7" height="8" fill="#d2d2d2"/><path d="M638.8 410.39 h7 M638.8 417.79 h7" stroke="#777" stroke-width="1.1"/><path d="M640.3 411.09 l5 6 M640.3 417.09 l5 -6" stroke="#f4f4f4" stroke-width="0.9"/><ellipse cx="638.7" cy="414.09" rx="2.4" ry="3.3" fill="#fff" stroke="#505050" stroke-width="1.9"/><rect x="553.4" y="425.30" width="7" height="8" fill="#cfcfcf"/><path d="M553.4 425.60 h7 M553.4 433.00 h7" stroke="#777" stroke-width="1.1"/><path d="M554 426.30 l5 6 M554 432.30 l5 -6" stroke="#f4f4f4" stroke-width="0.9"/><ellipse cx="560.6" cy="429.30" rx="2.4" ry="3.3" fill="#fff" stroke="#505050" stroke-width="1.9"/><rect x="638.8" y="425.30" width="7" height="8" fill="#d2d2d2"/><path d="M638.8 425.60 h7 M638.8 433.00 h7" stroke="#777" stroke-width="1.1"/><path d="M640.3 426.30 l5 6 M640.3 432.30 l5 -6" stroke="#f4f4f4" stroke-width="0.9"/><ellipse cx="638.7" cy="429.30" rx="2.4" ry="3.3" fill="#fff" stroke="#505050" stroke-width="1.9"/>
<rect x="585.8" y="429" width="5.2" height="8.5" fill="#d2d2d2"/><path d="M586.2 430 l4.4 7 M590.6 430 l-4.4 7" stroke="#f4f4f4" stroke-width="0.7"/><path d="M585.6 437.5 v-9.5 M591.2 437.5 v-9.5" stroke="#5a5a5a" stroke-width="1"/><ellipse cx="588.4" cy="427" rx="2.3" ry="2.9" fill="#fff" stroke="#4a4a4a" stroke-width="1.6"/><rect x="596.9" y="429" width="5.2" height="8.5" fill="#d2d2d2"/><path d="M597.3 430 l4.4 7 M601.7 430 l-4.4 7" stroke="#f4f4f4" stroke-width="0.7"/><path d="M596.7 437.5 v-9.5 M602.3 437.5 v-9.5" stroke="#5a5a5a" stroke-width="1"/><ellipse cx="599.5" cy="427" rx="2.3" ry="2.9" fill="#fff" stroke="#4a4a4a" stroke-width="1.6"/><rect x="608.0" y="429" width="5.2" height="8.5" fill="#d2d2d2"/><path d="M608.4 430 l4.4 7 M612.8 430 l-4.4 7" stroke="#f4f4f4" stroke-width="0.7"/><path d="M607.8 437.5 v-9.5 M613.4 437.5 v-9.5" stroke="#5a5a5a" stroke-width="1"/><ellipse cx="610.6" cy="427" rx="2.3" ry="2.9" fill="#fff" stroke="#4a4a4a" stroke-width="1.6"/>
</svg>
<div class="lb" style="left:267.0px;top:134.99px;color:#a9561a">PWM0A</div>
<div class="lb" style="left:316.5px;top:134.99px;color:#2b7f98">COM1 TX</div>
<div class="lb" style="left:377.0px;top:134.99px;color:#6d2c9e">I2C SDA</div>
<div class="lb" style="left:437.5px;top:134.99px;color:#f07622">SPI RX</div>
<div class="lb" style="left:498.0px;top:134.99px;color:#00ad4c">GP0</div>
<div class="lb" style="left:267.0px;top:150.19px;color:#a9561a">PWM0B</div>
<div class="lb" style="left:316.5px;top:150.19px;color:#2b7f98">COM1 RX</div>
<div class="lb" style="left:377.0px;top:150.19px;color:#6d2c9e">I2C SCL</div>
<div class="lb" style="left:498.0px;top:150.19px;color:#00ad4c">GP1</div>
<div class="lb" style="left:267.0px;top:180.59px;color:#a9561a">PWM1A</div>
<div class="lb" style="left:377.0px;top:180.59px;color:#6d2c9e">I2C2 SDA</div>
<div class="lb" style="left:437.5px;top:180.59px;color:#f07622">SPI CLK</div>
<div class="lb" style="left:498.0px;top:180.59px;color:#00ad4c">GP2</div>
<div class="lb" style="left:267.0px;top:195.79px;color:#a9561a">PWM1B</div>
<div class="lb" style="left:377.0px;top:195.79px;color:#6d2c9e">I2C2 SCL</div>
<div class="lb" style="left:437.5px;top:195.79px;color:#f07622">SPI TX</div>
<div class="lb" style="left:498.0px;top:195.79px;color:#00ad4c">GP3</div>
<div class="lb" style="left:267.0px;top:210.99px;color:#a9561a">PWM2A</div>
<div class="lb" style="left:316.5px;top:210.99px;color:#2b7f98">COM2 TX</div>
<div class="lb" style="left:377.0px;top:210.99px;color:#6d2c9e">I2C SDA</div>
<div class="lb" style="left:437.5px;top:210.99px;color:#f07622">SPI RX</div>
<div class="lb" style="left:498.0px;top:210.99px;color:#00ad4c">GP4</div>
<div class="lb" style="left:267.0px;top:226.19px;color:#a9561a">PWM2B</div>
<div class="lb" style="left:316.5px;top:226.19px;color:#2b7f98">COM2 RX</div>
<div class="lb" style="left:377.0px;top:226.19px;color:#6d2c9e">I2C SCL</div>
<div class="lb" style="left:498.0px;top:226.19px;color:#00ad4c">GP5</div>
<div class="lb" style="left:267.0px;top:256.59px;color:#a9561a">PWM3A</div>
<div class="lb" style="left:377.0px;top:256.59px;color:#6d2c9e">I2C2 SDA</div>
<div class="lb" style="left:437.5px;top:256.59px;color:#f07622">SPI CLK</div>
<div class="lb" style="left:498.0px;top:256.59px;color:#00ad4c">GP6</div>
<div class="lb" style="left:267.0px;top:271.79px;color:#a9561a">PWM3B</div>
<div class="lb" style="left:377.0px;top:271.79px;color:#6d2c9e">I2C2 SCL</div>
<div class="lb" style="left:437.5px;top:271.79px;color:#f07622">SPI TX</div>
<div class="lb" style="left:498.0px;top:271.79px;color:#00ad4c">GP7</div>
<div class="lb" style="left:267.0px;top:332.59px;color:#a9561a">PWM5A</div>
<div class="lb" style="left:377.0px;top:332.59px;color:#6d2c9e">I2C2 SDA</div>
<div class="lb" style="left:437.5px;top:332.59px;color:#f07622">SPI2 CLK</div>
<div class="lb" style="left:498.0px;top:332.59px;color:#00ad4c">GP10</div>
<div class="lb" style="left:267.0px;top:347.79px;color:#a9561a">PWM5B</div>
<div class="lb" style="left:377.0px;top:347.79px;color:#6d2c9e">I2C2 SCL</div>
<div class="lb" style="left:437.5px;top:347.79px;color:#f07622">SPI2 TX</div>
<div class="lb" style="left:498.0px;top:347.79px;color:#00ad4c">GP11</div>
<div class="lb" style="left:267.0px;top:362.99px;color:#a9561a">PWM6A</div>
<div class="lb" style="left:316.5px;top:362.99px;color:#2b7f98">COM1 TX</div>
<div class="lb" style="left:377.0px;top:362.99px;color:#6d2c9e">I2C SDA</div>
<div class="lb" style="left:437.5px;top:362.99px;color:#f07622">SPI2 RX</div>
<div class="lb" style="left:498.0px;top:362.99px;color:#00ad4c">GP12</div>
<div class="lb" style="left:267.0px;top:378.19px;color:#a9561a">PWM6B</div>
<div class="lb" style="left:316.5px;top:378.19px;color:#2b7f98">COM1 RX</div>
<div class="lb" style="left:377.0px;top:378.19px;color:#6d2c9e"><span style="color:#000">I</span>2C SCL</div>
<div class="lb" style="left:498.0px;top:378.19px;color:#00ad4c">GP13</div>
<div class="lb" style="left:267.0px;top:408.59px;color:#a9561a">PWM7A</div>
<div class="lb" style="left:377.0px;top:408.59px;color:#6d2c9e">I2C2 SDA</div>
<div class="lb" style="left:437.5px;top:408.59px;color:#f07622">SPI2 CLK</div>
<div class="lb" style="left:498.0px;top:408.59px;color:#00ad4c">GP14</div>
<div class="lb" style="left:267.0px;top:423.79px;color:#a9561a">PWM7B</div>
<div class="lb" style="left:377.0px;top:423.79px;color:#6d2c9e">I2C2 SCL</div>
<div class="lb" style="left:437.5px;top:423.79px;color:#f07622">SPI2 TX</div>
<div class="lb" style="left:498.0px;top:423.79px;color:#00ad4c">GP15</div>
<div class="lb r" style="right:476.2px;top:134.99px;color:#00ad4c">1</div>
<div class="lb r" style="right:476.2px;top:150.19px;color:#00ad4c">2</div>
<div class="lb r" style="right:476.2px;top:180.59px;color:#00ad4c">4</div>
<div class="lb r" style="right:476.2px;top:195.79px;color:#00ad4c">5</div>
<div class="lb r" style="right:476.2px;top:210.99px;color:#00ad4c">6</div>
<div class="lb r" style="right:476.2px;top:226.19px;color:#00ad4c">7</div>
<div class="lb r" style="right:476.2px;top:256.59px;color:#00ad4c">9</div>
<div class="lb r" style="right:476.2px;top:271.79px;color:#00ad4c">10</div>
<div class="lb r" style="right:476.2px;top:286.99px;color:#66231f">11</div>
<div class="lb r" style="right:476.2px;top:302.19px;color:#66231f">12</div>
<div class="lb r" style="right:476.2px;top:332.59px;color:#00ad4c">14</div>
<div class="lb r" style="right:476.2px;top:347.79px;color:#00ad4c">15</div>
<div class="lb r" style="right:476.2px;top:362.99px;color:#00ad4c">16</div>
<div class="lb r" style="right:476.2px;top:378.19px;color:#00ad4c">17</div>
<div class="lb r" style="right:476.2px;top:408.59px;color:#00ad4c">19</div>
<div class="lb r" style="right:476.2px;top:423.79px;color:#00ad4c">20</div>
<div class="lb" style="left:513.5px;top:165.39px;color:#000">GND</div>
<div class="lb" style="left:513.5px;top:241.39px;color:#000">GND</div>
<div class="lb" style="left:513.5px;top:317.39px;color:#000">GND</div>
<div class="lb" style="left:513.5px;top:393.39px;color:#000">GND</div>
<div class="lb r" style="right:533.5px;top:286.99px;color:#66231f">PS2 KEYBOARD CLOCK</div>
<div class="lb" style="left:499.5px;top:286.99px;color:#66231f">GP8</div>
<div class="lb r" style="right:533.5px;top:302.19px;color:#66231f">PS2 KEYBOARD DATA</div>
<div class="lb" style="left:499.5px;top:302.19px;color:#66231f">GP9</div>
<div class="lb" style="left:660.0px;top:134.99px;color:#ff0000">VBUS</div>
<div class="lb" style="left:660.0px;top:150.19px;color:#ff0000">VSYS</div>
<div class="lb" style="left:660.0px;top:180.59px;color:#ff0000">3V3EN</div>
<div class="lb" style="left:660.0px;top:195.79px;color:#ff0000">3V3</div>
<div class="lb" style="left:660.0px;top:210.99px;color:#ff0000">ADC VREF</div>
<div class="lb" style="left:660.0px;top:286.99px;color:#ff0000">RUN</div>
<div class="lb" style="left:660.5px;top:165.39px;color:#000">GND</div>
<div class="lb" style="left:660.5px;top:241.39px;color:#000">GND</div>
<div class="lb" style="left:660.5px;top:317.39px;color:#000">GND</div>
<div class="lb" style="left:660.5px;top:393.39px;color:#000">GND</div>
<div class="lb r" style="right:393.5px;top:210.99px;color:#274a86">VREF</div>
<div class="lb r" style="right:393.5px;top:226.19px;color:#274a86">ADC2</div>
<div class="lb r" style="right:393.5px;top:241.39px;color:#274a86">AGND</div>
<div class="lb r" style="right:393.5px;top:256.59px;color:#274a86">ADC1</div>
<div class="lb r" style="right:393.5px;top:271.79px;color:#274a86">ADC0</div>
<div class="lb" style="left:650.5px;top:226.19px;color:#00ad4c">34</div>
<div class="lb" style="left:673.0px;top:226.19px;color:#00ad4c">GP28</div>
<div class="lb" style="left:707.0px;top:226.19px;color:#f07622">SPI2 RX</div>
<div class="lb" style="left:763.5px;top:226.19px;color:#6d2c9e">I2C SDA</div>
<div class="lb" style="left:816.0px;top:226.19px;color:#2b7f98">COM1 TX</div>
<div class="lb" style="left:876.5px;top:226.19px;color:#a9561a">PWM6A</div>
<div class="lb" style="left:650.5px;top:256.59px;color:#00ad4c">32</div>
<div class="lb" style="left:673.0px;top:256.59px;color:#00ad4c">GP27</div>
<div class="lb" style="left:707.0px;top:256.59px;color:#f07622">SPI2 TX</div>
<div class="lb" style="left:763.5px;top:256.59px;color:#6d2c9e">I2C2 SCL</div>
<div class="lb" style="left:876.5px;top:256.59px;color:#a9561a">PWM5B</div>
<div class="lb" style="left:650.5px;top:271.79px;color:#00ad4c">31</div>
<div class="lb" style="left:673.0px;top:271.79px;color:#00ad4c">GP26</div>
<div class="lb" style="left:707.0px;top:271.79px;color:#f07622">SPI2 CLK</div>
<div class="lb" style="left:763.5px;top:271.79px;color:#6d2c9e">I2C2 SDA</div>
<div class="lb" style="left:876.5px;top:271.79px;color:#a9561a">PWM5A</div>
<div class="lb" style="left:650.5px;top:302.19px;color:#00ad4c">29</div>
<div class="lb" style="left:673.0px;top:302.19px;color:#00ad4c">GP22</div>
<div class="lb" style="left:763.5px;top:302.19px;color:#6d2c9e">I2C2 SDA</div>
<div class="lb" style="left:876.5px;top:302.19px;color:#a9561a">PWM3A</div>
<div class="lb" style="left:650.5px;top:332.59px;color:#66231f">27</div>
<div class="lb" style="left:673.0px;top:332.59px;color:#66231f">GP21</div>
<div class="lb" style="left:711.0px;top:332.59px;color:#66231f">VGA RED OUTPUT</div>
<div class="lb" style="left:650.5px;top:347.79px;color:#66231f">26</div>
<div class="lb" style="left:673.0px;top:347.79px;color:#66231f">GP20</div>
<div class="lb" style="left:711.0px;top:347.79px;color:#66231f">VGA GREEN OUTPUT</div>
<div class="lb" style="left:650.5px;top:362.99px;color:#66231f">25</div>
<div class="lb" style="left:673.0px;top:362.99px;color:#66231f">GP19</div>
<div class="lb" style="left:711.0px;top:362.99px;color:#66231f">VGA ½ GREEN OUTPUT</div>
<div class="lb" style="left:650.5px;top:378.19px;color:#66231f">24</div>
<div class="lb" style="left:673.0px;top:378.19px;color:#66231f">GP18</div>
<div class="lb" style="left:711.0px;top:378.19px;color:#66231f">VGA BLUE OUTPUT</div>
<div class="lb" style="left:650.5px;top:408.59px;color:#66231f">22</div>
<div class="lb" style="left:673.0px;top:408.59px;color:#66231f">GP17</div>
<div class="lb" style="left:711.0px;top:408.59px;color:#66231f">VGA VERTICAL SYNC</div>
<div class="lb" style="left:650.5px;top:423.79px;color:#66231f">21</div>
<div class="lb" style="left:673.0px;top:423.79px;color:#66231f">GP16</div>
<div class="lb" style="left:711.0px;top:423.79px;color:#66231f">VGA HORIZONTAL SYNC</div>
</div>
<div id="task">
<svg class="abs" style="left:0;top:0" width="20" height="16" viewBox="0 0 20 16"><path d="M4.5 4.5 l4-0.5 v3.6 h-4z M9.2 3.9 l5.5-0.8 v4.5 h-5.5z M4.5 8.4 h4 v3.6 l-4-0.5z M9.2 8.4 h5.5 v4.5 l-5.5-0.8z" fill="#fff"/></svg>
<div class="abs" style="left:19px;top:0;width:138px;height:16px;background:#f0f0f0"></div>
<svg class="abs" style="left:19px;top:0" width="138" height="16" viewBox="19 0 138 16"><circle cx="31.6" cy="6.4" r="2.6" fill="none" stroke="#222" stroke-width="0.9"/><path d="M29.8 8.3 l-2.6 3.2" stroke="#222" stroke-width="1"/>
<g transform="translate(0,-1.8)"><ellipse cx="141" cy="14" rx="8.6" ry="2" fill="#d4d4e4"/>
<path d="M134 7.5 v5 a7 2.2 0 0 0 14 0 v-5z" fill="#f8ece4"/>
<path d="M134 12.2 a7 2.2 0 0 0 14 0" fill="none" stroke="#5cc0b8" stroke-width="1.2"/>
<path d="M134 10 a7 2 0 0 0 14 0" fill="none" stroke="#f0a898" stroke-width="1"/>
<path d="M134 8 a7 2 0 0 0 14 0" fill="none" stroke="#66c4bc" stroke-width="1"/>
<path d="M135.5 5.5 v2.6 a5.5 1.6 0 0 0 11 0 v-2.6z" fill="#f6efe8"/>
<path d="M135.5 7 a5.5 1.6 0 0 0 11 0" fill="none" stroke="#f0a898" stroke-width="0.8"/>
<ellipse cx="141" cy="5.5" rx="5.5" ry="1.6" fill="#fff4e8" stroke="#7ccac4" stroke-width="0.6"/>
<g fill="#d84040"><circle cx="136.5" cy="7" r="1"/><circle cx="139.5" cy="5" r="0.9"/><circle cx="143" cy="5" r="0.9"/><circle cx="145.2" cy="7.5" r="1"/><circle cx="140" cy="8.3" r="1.1"/></g></g>
</svg>
<div class="ui" style="left:40.5px;top:3.5px;font-size:8.3px;line-height:9px;color:#222;transform:scaleX(0.91);transform-origin:0 0">Search</div>
<svg class="abs" style="left:162.3px;top:2px" width="12" height="12" viewBox="0 0 12 12"><rect x="1.5" y="2" width="9" height="8.5" rx="1" fill="#f4f4f4"/><rect x="3.5" y="4.5" width="2" height="2" fill="#f25022"/><rect x="6" y="4.5" width="2" height="2" fill="#7fba00"/><rect x="3.5" y="7" width="2" height="2" fill="#00a4ef"/><rect x="6" y="7" width="2" height="2" fill="#ffb900"/></svg><svg class="abs" style="left:182.01px;top:2px" width="12" height="12" viewBox="0 0 12 12"><rect x="2" y="2" width="8" height="6" fill="#ccc" stroke="#888" stroke-width=".6"/><rect x="3" y="3" width="6" height="4" fill="#456"/><path d="M3.5 5 h5" stroke="#7c7" stroke-width=".6"/><path d="M4 10 h4" stroke="#ccc"/></svg><svg class="abs" style="left:201.72px;top:2px" width="12" height="12" viewBox="0 0 12 12"><path d="M2 7 a4 4 0 0 1 8 0" fill="none" stroke="#1a2ad8" stroke-width="1.3"/><circle cx="6" cy="8" r="2.3" fill="#f06020"/><rect x="1.5" y="6.5" width="2" height="3" fill="#1a2ad8"/><rect x="8.5" y="6.5" width="2" height="3" fill="#1a2ad8"/></svg><svg class="abs" style="left:221.43px;top:2px" width="12" height="12" viewBox="0 0 12 12"><rect x="2" y="3" width="8" height="6" fill="#eee"/><rect x="4" y="4.5" width="4" height="3" fill="#d00"/><rect x="3" y="3" width="6" height="1" fill="#555"/></svg><svg class="abs" style="left:241.14px;top:2px" width="12" height="12" viewBox="0 0 12 12"><path d="M3 10 v-5 a3 3 0 0 1 6 0 v5" fill="none" stroke="#1fb0d8" stroke-width="1.6"/><path d="M3 10 v-4" stroke="#0a5a80" stroke-width="1.6"/></svg><svg class="abs" style="left:260.85px;top:2px" width="12" height="12" viewBox="0 0 12 12"><rect x="2" y="3" width="8" height="7" fill="#f0d040"/><path d="M5 4 l2 3 l-2 2" fill="none" stroke="#333" stroke-width=".7"/><rect x="1.5" y="9" width="9" height="1.3" fill="#aaa"/></svg><svg class="abs" style="left:280.56px;top:2px" width="12" height="12" viewBox="0 0 12 12"><rect x="2" y="2" width="8" height="6" fill="#ccc" stroke="#888" stroke-width=".6"/><rect x="3" y="3" width="6" height="4" fill="#456"/><path d="M3.5 5 h5" stroke="#7c7" stroke-width=".6"/><path d="M4 10 h4" stroke="#ccc"/></svg><svg class="abs" style="left:300.27px;top:2px" width="12" height="12" viewBox="0 0 12 12"><circle cx="6" cy="6" r="4.3" fill="#e53935"/><path d="M6 6 L10.3 6 A4.3 4.3 0 0 1 3.8 9.7 z" fill="#43a047"/><path d="M6 6 L3.8 9.7 A4.3 4.3 0 0 1 1.8 4.5 z" fill="#fdd835"/><circle cx="6" cy="6" r="1.9" fill="#1e88e5" stroke="#fff" stroke-width=".7"/></svg><svg class="abs" style="left:319.98px;top:2px" width="12" height="12" viewBox="0 0 12 12"><path d="M2 6 l3-1 l2 1 l3-1 v2 l-3 1 l-2-1 l-3 1z" fill="#5aa0d0"/></svg><svg class="abs" style="left:339.69px;top:2px" width="12" height="12" viewBox="0 0 12 12"><rect x="1.5" y="3" width="9" height="6.5" fill="#fff"/><path d="M2 6 l2-1 l2 1 l2-2 l2 1 v3 h-8z" fill="#111"/></svg><svg class="abs" style="left:359.4px;top:2px" width="12" height="12" viewBox="0 0 12 12"><circle cx="6" cy="6.5" r="3.8" fill="#b9c7d8"/><circle cx="5" cy="6" r="1.5" fill="#e57"/><path d="M8 2 l2 2 l-3 4" stroke="#e0a040" stroke-width="1"/></svg><svg class="abs" style="left:379.11px;top:2px" width="12" height="12" viewBox="0 0 12 12"><rect x="4.5" y="1" width="3" height="8" fill="#10b8a8"/><path d="M2.5 6 l3.5 4 l3.5-4" fill="#10b8a8"/><rect x="1" y="10" width="10" height="1.2" fill="#222"/></svg><svg class="abs" style="left:398.82px;top:2px" width="12" height="12" viewBox="0 0 12 12"><rect x="2" y="2" width="7" height="6.5" fill="#dde"/><rect x="3" y="3" width="5" height="3" fill="#224"/><path d="M2 9 h8 M6 10 h4" stroke="#2a2aff" stroke-width="1"/></svg><svg class="abs" style="left:418.53px;top:2px" width="12" height="12" viewBox="0 0 12 12"><circle cx="6" cy="6" r="4.3" fill="#de5833"/><circle cx="6" cy="6" r="2.8" fill="#fff"/><path d="M5 4 h2 v4 h-2z" fill="#de5833"/></svg><svg class="abs" style="left:438.24px;top:2px" width="12" height="12" viewBox="0 0 12 12"><rect x="1.5" y="3" width="9" height="7" fill="#e8b830"/><rect x="1.5" y="2.5" width="4" height="2" fill="#f0c840"/><rect x="2.5" y="5.5" width="7" height="2" fill="#3a7ad8"/></svg><div class="abs" style="left:454.7px;top:0;width:18.8px;height:16px;background:#5a5148"></div><div class="abs" style="left:454.7px;top:15px;width:18.8px;height:1px;background:#e8d8c0"></div><svg class="abs" style="left:457.95px;top:2px" width="12" height="12" viewBox="0 0 12 12"><ellipse cx="6" cy="6" rx="3.2" ry="3.9" fill="none" stroke="#ff1b2d" stroke-width="1.8"/></svg>
<svg class="abs" style="left:830px;top:0" width="194" height="16" viewBox="830 0 194 16">
 <path d="M932.5 9.5 l2-2 l2 2" fill="none" stroke="#fff" stroke-width="0.9"/>
 <path d="M944 6 h2 l1.5-2 v8 l-1.5-2 h-2z" fill="none" stroke="#fff" stroke-width="0.8"/><path d="M949 6 l1 2 l-1 2" fill="none" stroke="#fff" stroke-width="0.7"/>
 <rect x="980.5" y="4" width="8" height="6" fill="none" stroke="#fff" stroke-width="0.9"/><path d="M982.5 10 v1.5 l1.5-1.5" fill="none" stroke="#fff" stroke-width="0.8"/>
 <defs><linearGradient id="cp" x1="0" y1="1" x2="1" y2="0"><stop offset="0" stop-color="#f8d030"/><stop offset=".4" stop-color="#30c890"/><stop offset="1" stop-color="#3070f0"/></linearGradient></defs>
 <path d="M1002 11.5 q-1.5-5 2.5-8 q3-1.5 4.5 1 l-3 7z" fill="url(#cp)"/><path d="M1007.5 6 l3.5 0.3 v4.5 l-4 1.5z" fill="#e060d0"/><rect x="1003.5" y="11" width="7" height="2.8" rx="0.5" fill="#f0c020"/><path d="M1005 12.4 h0.8 M1006.8 12.4 h0.8 M1008.6 12.4 h0.8" stroke="#333" stroke-width="0.7"/>
 <path d="M1021.5 0 v16" stroke="#6a625a" stroke-width="0.6"/>
</svg>
<div class="ui" style="left:954px;top:4.5px;font-size:6.5px;line-height:7px;color:#fff;letter-spacing:-0.3px">20:23</div>
</div>
</body></html>
